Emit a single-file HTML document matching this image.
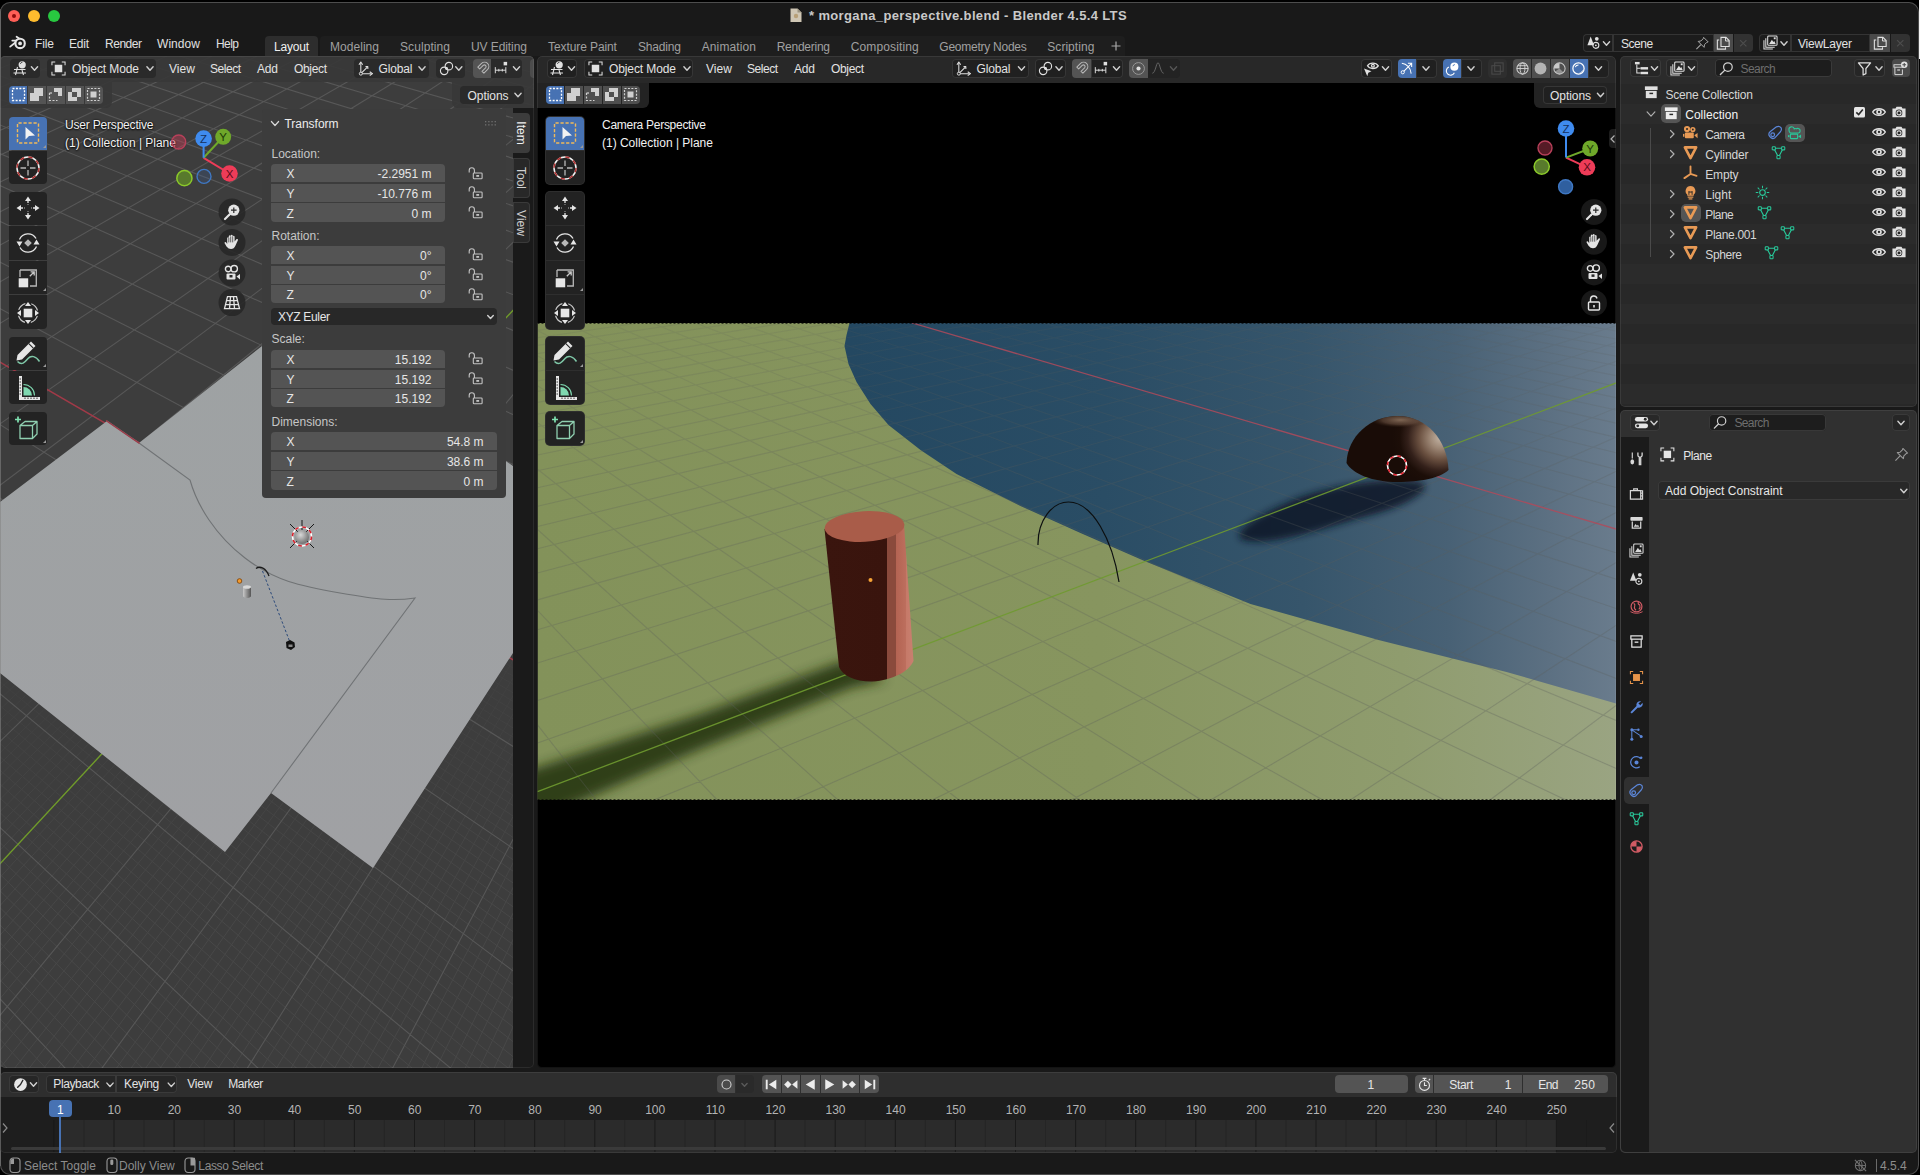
<!DOCTYPE html>
<html><head><meta charset="utf-8"><title>Blender</title>
<style>
*{box-sizing:border-box;margin:0;padding:0}
html,body{width:1920px;height:1175px;overflow:hidden;background:#000}
body{font-family:"Liberation Sans",sans-serif;font-size:12px;color:#e0e0e0;position:relative}
.a{position:absolute}
.win{position:absolute;left:0;top:0;width:1920px;height:1175px;overflow:hidden}
.winbg{position:absolute;left:0;top:1.500px;width:1918.500px;height:1173.500px;background:#191919;border-radius:10px;box-shadow:inset 0 0 0 1px rgba(120,120,120,.55)}
.t{position:absolute;white-space:nowrap;line-height:1}
.btn{position:absolute;border-radius:4px;background:#2a2a2a}
.area{position:absolute;overflow:hidden}
svg{position:absolute;overflow:visible}

</style></head>
<body>
<div class="win">
<div class="winbg"></div>
<div class="a" style="left:1919px;top:0;width:1px;height:59px;background:#f4f4f4"></div>
<!-- traffic lights -->
<div class="a" style="left:8px;top:10px;width:12px;height:12px;border-radius:6px;background:#fe5f57"></div>
<div class="a" style="left:12px;top:14px;width:4px;height:4px;border-radius:2px;background:#8c0b0b"></div>
<div class="a" style="left:28px;top:10px;width:12px;height:12px;border-radius:6px;background:#febc2e"></div>
<div class="a" style="left:48px;top:10px;width:12px;height:12px;border-radius:6px;background:#28c840"></div>


<!-- LEFT VIEWPORT AREA -->
<div class="area" id="vl" style="left:0;top:56px;width:534px;height:1012px;border-radius:5px;background:#3d3d3d">
<svg width="534" height="1012" viewBox="0 0 534 1012" style="left:0;top:0">
<defs>
<linearGradient id="plg" x1="0" y1="0" x2="0" y2="1"><stop offset="0" stop-color="#9ea2a3"/><stop offset="1" stop-color="#a0a1a4"/></linearGradient>
<linearGradient id="fade" x1="0" y1="500" x2="0" y2="860" gradientUnits="userSpaceOnUse"><stop offset="0" stop-color="#000"/><stop offset="1" stop-color="#fff"/></linearGradient>
<mask id="fm" maskUnits="userSpaceOnUse" x="0" y="0" width="534" height="1012"><rect x="0" y="0" width="534" height="1012" fill="url(#fade)"/></mask>
</defs>
<g mask="url(#fm)"><path d="M3.6 440.0L-2.0 444.3M12.5 440.0L-2.0 451.2M21.4 440.0L-2.0 458.2M30.3 440.0L-2.0 465.3M39.2 440.0L-2.0 472.5M48.1 440.0L-2.0 479.8M57.0 440.0L-2.0 487.2M65.9 440.0L-2.0 494.8M83.7 440.0L-2.0 510.3M92.5 440.0L-2.0 518.2M101.4 440.0L-2.0 526.3M110.3 440.0L-2.0 534.5M533.2 440.0L536.0 441.3M119.2 440.0L-2.0 542.8M521.6 440.0L536.0 447.0M128.1 440.0L-2.0 551.3M510.0 440.0L536.0 452.8M137.0 440.0L-2.0 560.0M498.4 440.0L536.0 458.6M145.8 440.0L-2.0 568.8M486.8 440.0L536.0 464.5M154.7 440.0L-2.0 577.7M475.2 440.0L536.0 470.5M172.5 440.0L-2.0 596.1M451.9 440.0L536.0 482.7M181.3 440.0L-2.0 605.5M440.3 440.0L536.0 488.9M190.2 440.0L-2.0 615.1M428.7 440.0L536.0 495.2M199.1 440.0L-2.0 624.9M417.1 440.0L536.0 501.6M208.0 440.0L-2.0 634.8M405.4 440.0L536.0 508.1M216.8 440.0L-2.0 645.0M393.8 440.0L536.0 514.6M225.7 440.0L-2.0 655.3M382.2 440.0L536.0 521.3M234.6 440.0L-2.0 665.8M370.5 440.0L536.0 528.1M243.4 440.0L-2.0 676.6M358.9 440.0L536.0 534.9M261.2 440.0L-2.0 698.7M335.6 440.0L536.0 548.9M270.0 440.0L-2.0 710.0M324.0 440.0L536.0 556.0M278.9 440.0L-2.0 721.6M312.3 440.0L536.0 563.3M287.7 440.0L-2.0 733.5M300.7 440.0L536.0 570.6M296.6 440.0L-2.0 745.6M289.0 440.0L536.0 578.1M305.4 440.0L-2.0 757.9M277.4 440.0L536.0 585.7M314.3 440.0L-2.0 770.5M265.7 440.0L536.0 593.3M323.2 440.0L-2.0 783.3M254.0 440.0L536.0 601.1M332.0 440.0L-2.0 796.5M242.4 440.0L536.0 609.1M349.7 440.0L-2.0 823.6M219.1 440.0L536.0 625.3M358.6 440.0L-2.0 837.6M207.4 440.0L536.0 633.6M367.4 440.0L-2.0 851.9M195.7 440.0L536.0 642.0M376.2 440.0L-2.0 866.5M184.0 440.0L536.0 650.5M385.1 440.0L-2.0 881.5M172.4 440.0L536.0 659.2M393.9 440.0L-2.0 896.8M160.7 440.0L536.0 668.0M402.8 440.0L-2.0 912.5M149.0 440.0L536.0 677.0M411.6 440.0L-2.0 928.5M137.3 440.0L536.0 686.1M420.4 440.0L-2.0 945.0M125.6 440.0L536.0 695.4M438.1 440.0L-2.0 979.0M102.3 440.0L536.0 714.3M447.0 440.0L-2.0 996.7M90.6 440.0L536.0 724.1M455.8 440.0L-1.4 1014.0M78.9 440.0L536.0 734.0M464.6 440.0L13.2 1014.0M67.2 440.0L536.0 744.0M473.4 440.0L27.8 1014.0M55.5 440.0L536.0 754.3M482.3 440.0L42.3 1014.0M43.8 440.0L536.0 764.7M491.1 440.0L56.9 1014.0M32.1 440.0L536.0 775.3M499.9 440.0L71.5 1014.0M20.4 440.0L536.0 786.1M508.8 440.0L86.1 1014.0M8.7 440.0L536.0 797.0M526.4 440.0L115.2 1014.0M-2.0 448.8L536.0 819.6M535.2 440.0L129.8 1014.0M-2.0 457.0L536.0 831.2M536.0 451.5L144.4 1014.0M-2.0 465.4L536.0 843.0M536.0 464.6L158.9 1014.0M-2.0 473.9L536.0 855.0M536.0 478.0L173.5 1014.0M-2.0 482.6L536.0 867.2M536.0 491.8L188.0 1014.0M-2.0 491.5L536.0 879.7M536.0 506.0L202.6 1014.0M-2.0 500.5L536.0 892.4M536.0 520.6L217.1 1014.0M-2.0 509.7L536.0 905.4M536.0 535.8L231.7 1014.0M-2.0 519.1L536.0 918.6M536.0 567.4L260.8 1014.0M-2.0 538.5L536.0 945.8M536.0 584.1L275.3 1014.0M-2.0 548.4L536.0 959.9M536.0 601.3L289.9 1014.0M-2.0 558.6L536.0 974.2M536.0 619.0L304.4 1014.0M-2.0 569.0L536.0 988.8M536.0 637.4L319.0 1014.0M-2.0 579.5L536.0 1003.7M536.0 656.4L333.5 1014.0M-2.0 590.4L529.8 1014.0M536.0 676.1L348.0 1014.0M-2.0 601.4L510.6 1014.0M536.0 696.6L362.6 1014.0M-2.0 612.7L491.3 1014.0M536.0 717.7L377.1 1014.0M-2.0 624.2L472.1 1014.0M536.0 762.5L406.1 1014.0M-2.0 648.0L433.6 1014.0M536.0 786.3L420.7 1014.0M-2.0 660.3L414.3 1014.0M536.0 810.9L435.2 1014.0M-2.0 672.9L395.0 1014.0M536.0 836.6L449.7 1014.0M-2.0 685.8L375.8 1014.0M536.0 863.4L464.2 1014.0M-2.0 698.9L356.5 1014.0M536.0 891.3L478.7 1014.0M-2.0 712.4L337.2 1014.0M536.0 920.4L493.3 1014.0M-2.0 726.2L317.9 1014.0M536.0 950.8L507.8 1014.0M-2.0 740.3L298.6 1014.0M536.0 982.6L522.3 1014.0M-2.0 754.8L279.3 1014.0M-2.0 784.8L240.7 1014.0M-2.0 800.4L221.4 1014.0M-2.0 816.4L202.1 1014.0M-2.0 832.8L182.8 1014.0M-2.0 849.6L163.5 1014.0M-2.0 866.9L144.2 1014.0M-2.0 884.6L124.9 1014.0M-2.0 902.9L105.5 1014.0M-2.0 921.6L86.2 1014.0M-2.0 960.6L47.5 1014.0M-2.0 981.0L28.2 1014.0M-2.0 1002.0L8.8 1014.0" stroke="#484848" stroke-width="1" fill="none"/></g>
<g><path d="M526.4 0.0L536.0 2.4M468.8 -0.0L536.0 17.3M31.2 0.0L-2.0 13.0M411.1 0.0L536.0 33.2M76.6 0.0L-2.0 32.1M353.3 -0.0L536.0 50.2M121.9 0.0L-2.0 52.8M295.4 0.0L536.0 68.5M167.1 0.0L-2.0 75.3M237.3 0.0L536.0 88.2M212.2 0.0L-2.0 100.0M179.2 0.0L536.0 109.4M257.3 0.0L-2.0 127.1M120.9 0.0L536.0 132.4M302.3 0.0L-2.0 157.0M62.5 0.0L536.0 157.4M347.3 0.0L-2.0 190.1M4.0 0.0L536.0 184.7M392.2 0.0L-2.0 227.1M-2.0 19.1L536.0 214.6M437.0 0.0L-2.0 268.7M-2.0 42.4L536.0 247.4M481.7 0.0L-2.0 315.7M-2.0 68.2L536.0 283.6M526.4 0.0L-2.0 369.2M-2.0 96.7L536.0 323.9M536.0 26.3L-2.0 430.8M-2.0 128.7L536.0 368.8M536.0 64.7L-2.0 502.5M-2.0 164.5L536.0 419.3M536.0 109.9L-2.0 586.8M-2.0 205.2L536.0 476.5M536.0 163.9L-2.0 687.5M-2.0 251.5L536.0 541.8M536.0 310.9L-2.0 961.8M-2.0 367.3L536.0 704.8M536.0 414.6L100.6 1014.0M-2.0 440.7L536.0 808.2M536.0 551.4L246.2 1014.0M-2.0 528.7L536.0 932.1M536.0 739.7L391.6 1014.0M-2.0 636.0L452.8 1014.0M-2.0 769.6L260.0 1014.0M-2.0 940.8L66.9 1014.0" stroke="#575757" stroke-width="1.1" fill="none"/></g>
<g><path d="M-2.0 305.0L536.0 617.1" stroke="#a13a48" stroke-width="1.4" fill="none"/><path d="M536.0 229.5L-2.0 809.9" stroke="#709c2a" stroke-width="1.4" fill="none"/></g>
<polygon points="0,446 107,365 139,387 262,290 300,260 513,410 534,424 534,566 513,597 373,812 271,737 225,796 0,617" fill="url(#plg)"/>
<path d="M107,365 L139,387 L190,424 C197,449 215,479 245,502 S300,530 340,537 S395,545 415,542 L271,737" fill="none" stroke="#707375" stroke-width="1.1"/>
<g transform="translate(0 -56)">
<path d="M106 420.500L139.500 443.500" stroke="#a13a48" stroke-width="1.400"/>
<defs><radialGradient id="lsp" cx=".4" cy=".35" r=".7"><stop offset="0" stop-color="#d8d8d8"/><stop offset="1" stop-color="#6a6a6a"/></radialGradient>
<linearGradient id="scy" x1="0" y1="0" x2="1" y2="0"><stop offset="0" stop-color="#c8c8c8"/><stop offset="1" stop-color="#555"/></linearGradient></defs>
<path d="M290 524L314 548M314 524L290 548M302 520V530" stroke="#1a1a1a" stroke-width="1"/>
<circle cx="302" cy="537" r="7" fill="url(#lsp)"/>
<circle cx="302" cy="536.500" r="9.500" fill="none" stroke="#fff" stroke-width="1.600"/>
<circle cx="302" cy="536.500" r="9.500" fill="none" stroke="#d8202c" stroke-width="1.600" stroke-dasharray="3.730 3.730"/>
<path d="M256 568.500C260 565.500 266 568 269 576" fill="none" stroke="#1a1a1a" stroke-width="1.300"/>
<path d="M262.500 571L289.500 641" stroke="#2c4a7a" stroke-width="1" stroke-dasharray="2.500 2"/>
<path d="M286 642L290 640L294.500 642.500L295 647L291 650L286.500 648Z" fill="#111"/><path d="M288.500 644.500H292.500V647H288.500Z" fill="#888"/>
<path d="M243 587V596.500Q247 599.500 251 596.500V587Z" fill="url(#scy)"/><ellipse cx="247" cy="587" rx="4" ry="1.800" fill="#d8d8d8"/>
<circle cx="239.500" cy="581" r="2.300" fill="#f39a2c" stroke="#7a3c00" stroke-width=".8"/>
</g>
</svg>
</div>
<!-- RIGHT VIEWPORT AREA -->
<div class="area" id="vr" style="left:536.500px;top:56px;width:1079.500px;height:1012px;border-radius:5px;background:#000">
<svg width="1080" height="1012" viewBox="536.500 56 1080 1012" style="left:0;top:0">
<defs>
<linearGradient id="gg" x1="537" y1="0" x2="1617" y2="0" gradientUnits="userSpaceOnUse"><stop offset="0" stop-color="#83925a"/><stop offset=".52" stop-color="#87955f"/><stop offset=".8" stop-color="#8f9c6e"/><stop offset="1" stop-color="#9aa482"/></linearGradient>
<linearGradient id="bg" x1="850" y1="0" x2="1617" y2="0" gradientUnits="userSpaceOnUse"><stop offset="0" stop-color="#244861"/><stop offset=".33" stop-color="#2a4d65"/><stop offset=".59" stop-color="#36556b"/><stop offset=".78" stop-color="#486175"/><stop offset=".91" stop-color="#5c7082"/><stop offset="1" stop-color="#6a7c8d"/></linearGradient>
<linearGradient id="gfade" x1="0" y1="323" x2="0" y2="800" gradientUnits="userSpaceOnUse"><stop offset="0" stop-color="#fff" stop-opacity=".45"/><stop offset=".35" stop-color="#fff" stop-opacity=".8"/><stop offset="1" stop-color="#fff" stop-opacity="1"/></linearGradient>
<mask id="gm" maskUnits="userSpaceOnUse" x="537" y="323" width="1080" height="477"><rect x="537" y="323" width="1080" height="477" fill="url(#gfade)"/></mask>
<filter id="b6" x="-20%" y="-20%" width="140%" height="140%"><feGaussianBlur stdDeviation="6"/></filter>
<filter id="b3" x="-20%" y="-20%" width="140%" height="140%"><feGaussianBlur stdDeviation="3.500"/></filter>
<filter id="b5" x="-20%" y="-20%" width="140%" height="140%"><feGaussianBlur stdDeviation="5"/></filter>
<clipPath id="rc"><rect x="537" y="323" width="1080" height="477"/></clipPath>
<clipPath id="bc"><polygon points="849,323 846,335 844,346 848,364 856,382 870,404 888,425 920,450 956,474 1020,506 1080,533 1144,561 1250,604 1378,640 1506,672 1617,704 1617,323"/></clipPath>
<clipPath id="gc"><path clip-rule="evenodd" d="M537 323H1617V800H537Z M849 323 L846 335 L844 346 L848 364 L856 382 L870 404 L888 425 L920 450 L956 474 L1020 506 L1080 533 L1144 561 L1250 604 L1378 640 L1506 672 L1617 704 L1617 323Z"/></clipPath>
<linearGradient id="cyl" x1="0" y1="0" x2="1" y2="0"><stop offset="0" stop-color="#3a150e"/><stop offset=".70" stop-color="#39140d"/><stop offset=".70" stop-color="#8a4a3c"/><stop offset=".80" stop-color="#8a4a3c"/><stop offset=".80" stop-color="#b36352"/><stop offset=".92" stop-color="#bd6f5e"/><stop offset=".92" stop-color="#c67a69"/><stop offset="1" stop-color="#c88070"/></linearGradient>
<radialGradient id="sph" cx="1440" cy="438" r="48" gradientUnits="userSpaceOnUse"><stop offset="0" stop-color="#c2b3a4"/><stop offset=".22" stop-color="#9c8674"/><stop offset=".45" stop-color="#6a5040"/><stop offset=".68" stop-color="#33201a"/><stop offset=".85" stop-color="#1c0e08"/><stop offset="1" stop-color="#190c07"/></radialGradient>
<radialGradient id="sphc" cx="1400" cy="420" r="30" gradientUnits="userSpaceOnUse" gradientTransform="translate(0 315) scale(1 .25)"><stop offset="0" stop-color="#8a705c" stop-opacity=".9"/><stop offset=".6" stop-color="#6a5040" stop-opacity=".6"/><stop offset="1" stop-color="#3a2518" stop-opacity="0"/></radialGradient>
</defs>
<g clip-path="url(#rc)">
<rect x="537" y="323" width="1080" height="477" fill="url(#gg)"/>
<polygon points="849,323 846,335 844,346 848,364 856,382 870,404 888,425 920,450 956,474 1020,506 1080,533 1144,561 1250,604 1378,640 1506,672 1617,704 1617,323" fill="url(#bg)"/>
<!-- cylinder shadow -->
<polygon points="842,661 886,680 850,688 700,749 560,810 500,838 500,780 560,760 700,714" fill="#243010" opacity=".86" filter="url(#b6)"/>
<!-- sphere shadow -->
<g clip-path="url(#bc)"><path d="M1242,540 C1228,532 1262,512 1300,497 C1335,484 1395,476 1420,482 C1436,488 1405,506 1375,514 C1335,524 1272,548 1242,540Z" fill="#0a1626" opacity=".85" filter="url(#b3)"/></g>
<g mask="url(#gm)"><path d="M540.6 323.0L537.0 323.5M589.3 323.0L537.0 330.4M638.0 323.0L537.0 337.7M686.8 323.0L537.0 345.4M735.7 323.0L537.0 353.6M784.6 323.0L537.0 362.2M833.5 323.0L537.0 371.3M882.6 323.0L537.0 381.0M931.6 323.0L537.0 391.4M980.7 323.0L537.0 402.4M1029.9 323.0L537.0 414.2M1079.1 323.0L537.0 426.8M1128.4 323.0L537.0 440.4M1177.8 323.0L537.0 455.0M1227.2 323.0L537.0 470.7M1276.6 323.0L537.0 487.8M1326.1 323.0L537.0 506.3M1375.7 323.0L537.0 526.5M1425.3 323.0L537.0 548.7M1474.9 323.0L537.0 573.0M1524.7 323.0L537.0 599.9M1574.4 323.0L537.0 629.7M1617.0 325.3L537.0 663.1M1617.0 342.0L537.0 700.6M1617.0 360.9L537.0 743.1M1617.0 407.4L653.5 800.0M1617.0 436.4L792.5 800.0M1617.0 470.7L931.6 800.0M1617.0 511.8L1070.8 800.0M1617.0 561.8L1210.2 800.0M1617.0 624.3L1349.8 800.0M1617.0 704.4L1489.5 800.0M1612.1 323.0L1617.0 323.8M1568.0 323.0L1617.0 331.3M1524.0 323.0L1617.0 339.2M1479.9 323.0L1617.0 347.5M1436.0 323.0L1617.0 356.4M1392.0 323.0L1617.0 365.8M1348.1 323.0L1617.0 375.9M1304.3 323.0L1617.0 386.6M1260.5 323.0L1617.0 398.0M1216.7 323.0L1617.0 410.3M1173.0 323.0L1617.0 423.5M1129.3 323.0L1617.0 437.7M1085.7 323.0L1617.0 453.1M1042.1 323.0L1617.0 469.8M998.6 323.0L1617.0 487.9M955.0 323.0L1617.0 507.7M868.2 323.0L1617.0 553.2M824.8 323.0L1617.0 579.6M781.5 323.0L1617.0 609.0M738.2 323.0L1617.0 641.9M694.9 323.0L1617.0 678.9M651.7 323.0L1617.0 720.9M608.5 323.0L1617.0 769.1M565.4 323.0L1565.3 800.0M537.0 330.6L1443.7 800.0M537.0 355.7L1322.2 800.0M537.0 385.8L1200.9 800.0M537.0 422.8L1079.6 800.0M537.0 469.3L958.5 800.0M537.0 529.5L837.5 800.0M537.0 610.4L716.7 800.0M537.0 724.9L595.9 800.0" stroke="#5c5e5c" stroke-opacity=".33" stroke-width="1.1" fill="none"/></g>
<path d="M911.6 323.0L1617.0 529.4" stroke="#b04a5a" stroke-width="1.3" stroke-opacity=".85" fill="none"/>
<path d="M1617.0 382.5L537.0 791.6" stroke="#6f9a30" stroke-width="1.3" stroke-opacity=".9" fill="none"/>
<!-- empty arc -->
<path d="M1037.500,545 C1037,520 1052,502 1068,502 C1092,502 1112,540 1118.500,582" fill="none" stroke="#0c0f10" stroke-width="1.2"/>
<!-- cylinder -->
<path d="M824,529 L838.500,667 C842,676 856,682 872,681.500 C892,680 908,672 913,661 L903.500,524 Z" fill="url(#cyl)"/>
<ellipse cx="864" cy="526.500" rx="40" ry="15.300" transform="rotate(-3 864 526.500)" fill="#a95c49"/>
<circle cx="870" cy="580" r="2" fill="#f5a336"/>
<!-- hemisphere -->
<path d="M1346,463 C1347,436 1370,416 1397,416 C1426,416 1447,440 1448,470 C1440,478 1420,482 1397,482 C1372,482 1352,474 1346,463Z" fill="url(#sph)"/>
<path d="M1346,463 C1347,436 1370,416 1397,416 C1426,416 1447,440 1448,470 C1440,478 1420,482 1397,482 C1372,482 1352,474 1346,463Z" fill="url(#sphc)"/>
<!-- 3d cursor -->
<circle cx="1396.500" cy="465.500" r="9.500" fill="none" stroke="#fff" stroke-width="1.6"/>
<circle cx="1396.500" cy="465.500" r="9.500" fill="none" stroke="#e0202c" stroke-width="1.6" stroke-dasharray="3.730 3.730"/>

</g>
<!-- dotted border of camera frame -->
<path d="M537 323.500H1617M537 799.500H1617" fill="none" stroke="#0a0a0a" stroke-width="1" stroke-dasharray="2 2" opacity=".7"/>
</svg>
</div>
<!-- OUTLINER -->
<div class="area" id="ol" style="left:1620px;top:56px;width:297px;height:351px;border-radius:5px;background:#282828">
</div>
<!-- PROPERTIES -->
<div class="area" id="pr" style="left:1620px;top:410px;width:297px;height:742.500px;border-radius:5px;background:#303030">
</div>
<!-- TIMELINE -->
<div class="area" id="tl" style="left:0;top:1071.500px;width:1617px;height:81px;border-radius:5px;background:#1e1e1e">
</div>

<svg class="a" style="left:789px;top:7px;" width="14" height="16" viewBox="0 0 14 16"><path d="M1.5 1.500 h7 l4 4 v9.500 h-11z" fill="#cfc6b4"/><path d="M8.500 1.500 v4 h4z" fill="#9a927f"/><circle cx="7" cy="9" r="2.200" fill="#b8a078"/></svg>
<div class="t" style="left:809.0px;top:6.9px;height:17px;line-height:17px;font-size:13px;color:#c9c9c9;letter-spacing:0.36px;font-weight:700;">* morgana_perspective.blend - Blender 4.5.4 LTS</div>
<svg class="a" style="left:9px;top:35px;" width="18" height="15" viewBox="0 0 18 15"><path d="M7.600 1.700L12 4.800M3.300 5.600H9M1.200 11.600L7 7" fill="none" stroke="#e6e6e6" stroke-width="1.800" stroke-linecap="round"/><circle cx="11.100" cy="8.400" r="4.700" fill="#191919" stroke="#e6e6e6" stroke-width="2.100"/><circle cx="11.100" cy="8.400" r="1.900" fill="#e6e6e6"/></svg>
<div class="t" style="left:35.0px;top:35.8px;height:16px;line-height:16px;font-size:12px;color:#e0e0e0;letter-spacing:-0.11px;">File</div>
<div class="t" style="left:69.0px;top:35.8px;height:16px;line-height:16px;font-size:12px;color:#e0e0e0;letter-spacing:-0.23px;">Edit</div>
<div class="t" style="left:105.0px;top:35.8px;height:16px;line-height:16px;font-size:12px;color:#e0e0e0;letter-spacing:-0.47px;">Render</div>
<div class="t" style="left:157.0px;top:35.8px;height:16px;line-height:16px;font-size:12px;color:#e0e0e0;letter-spacing:0.06px;">Window</div>
<div class="t" style="left:216.0px;top:35.8px;height:16px;line-height:16px;font-size:12px;color:#e0e0e0;letter-spacing:-0.56px;">Help</div>
<div class="a" style="left:320px;top:35.5px;width:805px;height:20px;background:#1e1e1e;border-radius:4px 4px 0 0;"></div>
<div class="a" style="left:265px;top:36px;width:53px;height:21px;background:#2d2d2d;border-radius:4px 4px 0 0;"></div>
<div class="t" style="left:274.0px;top:39.0px;height:16px;line-height:16px;font-size:12px;color:#f0f0f0;letter-spacing:-0.21px;">Layout</div>
<div class="t" style="left:330.0px;top:39.0px;height:16px;line-height:16px;font-size:12px;color:#a0a0a0;letter-spacing:0.04px;">Modeling</div>
<div class="t" style="left:400.0px;top:39.0px;height:16px;line-height:16px;font-size:12px;color:#a0a0a0;letter-spacing:0.08px;">Sculpting</div>
<div class="t" style="left:471.0px;top:39.0px;height:16px;line-height:16px;font-size:12px;color:#a0a0a0;letter-spacing:-0.08px;">UV Editing</div>
<div class="t" style="left:548.0px;top:39.0px;height:16px;line-height:16px;font-size:12px;color:#a0a0a0;letter-spacing:-0.09px;">Texture Paint</div>
<div class="t" style="left:638.0px;top:39.0px;height:16px;line-height:16px;font-size:12px;color:#a0a0a0;letter-spacing:-0.17px;">Shading</div>
<div class="t" style="left:701.7px;top:39.0px;height:16px;line-height:16px;font-size:12px;color:#a0a0a0;letter-spacing:0.12px;">Animation</div>
<div class="t" style="left:776.7px;top:39.0px;height:16px;line-height:16px;font-size:12px;color:#a0a0a0;letter-spacing:-0.26px;">Rendering</div>
<div class="t" style="left:850.7px;top:39.0px;height:16px;line-height:16px;font-size:12px;color:#a0a0a0;letter-spacing:0.13px;">Compositing</div>
<div class="t" style="left:939.3px;top:39.0px;height:16px;line-height:16px;font-size:12px;color:#a0a0a0;letter-spacing:-0.25px;">Geometry Nodes</div>
<div class="t" style="left:1047.3px;top:39.0px;height:16px;line-height:16px;font-size:12px;color:#a0a0a0;letter-spacing:0.04px;">Scripting</div>
<svg class="a" style="left:1110px;top:40px;" width="12" height="12" viewBox="0 0 12 12"><path d="M6 1.500V10.500M1.500 6H10.500" stroke="#a8a8a8" stroke-width="1.200" fill="none"/></svg>
<div class="a" style="left:0px;top:56px;width:534px;height:26px;background:rgba(55,55,55,.9);border-radius:5px 5px 0 0;"></div>
<div class="a" style="left:0px;top:82px;width:112px;height:26px;background:rgba(55,55,55,.9);border-radius:0 0 6px 0;"></div>
<div class="a" style="left:452px;top:82px;width:82px;height:26px;background:rgba(55,55,55,.9);border-radius:0 0 0 6px;"></div>
<div class="a" style="left:10px;top:59px;width:30px;height:18.5px;background:#2a2a2a;border-radius:4px;"></div>
<svg class="a" style="left:13px;top:60px;" width="16" height="16" viewBox="0 0 16 16"><path d="M1 9.500H12.500M0.500 13H13M4.500 7L2.500 15M9 10L10.500 15" stroke="#e0e0e0" stroke-width="1.100" fill="none"/><circle cx="9.200" cy="4.800" r="3.600" fill="#e0e0e0"/><path d="M7.300 3.800A2.300 2.300 0 0 1 9.400 2.300" stroke="#333" stroke-width=".9" fill="none"/></svg>
<svg class="a" style="left:0;top:0" width="1" height="1"><path d="M31.4 66.8 L34.5 70.2 L37.6 66.8" fill="none" stroke="#d0d0d0" stroke-width="1.4" stroke-linecap="round" stroke-linejoin="round"/></svg>
<div class="a" style="left:47px;top:59px;width:109px;height:18.5px;background:#2a2a2a;border-radius:4px;"></div>
<svg class="a" style="left:51px;top:60.5px;" width="15" height="15" viewBox="0 0 16 16"><rect x="4" y="4" width="8" height="8" fill="#e0e0e0"/><path d="M1 4.500V1H4.500M11.500 1H15V4.500M15 11.500V15H11.500M4.500 15H1V11.500" stroke="#e0e0e0" stroke-width="1.100" fill="none"/></svg>
<div class="t" style="left:72.0px;top:60.8px;height:16px;line-height:16px;font-size:12px;color:#e3e3e3;letter-spacing:-0.10px;">Object Mode</div>
<svg class="a" style="left:0;top:0" width="1" height="1"><path d="M146.9 66.8 L150.0 70.2 L153.1 66.8" fill="none" stroke="#d0d0d0" stroke-width="1.4" stroke-linecap="round" stroke-linejoin="round"/></svg>
<div class="t" style="left:169.0px;top:60.8px;height:16px;line-height:16px;font-size:12px;color:#e3e3e3;letter-spacing:0.07px;">View</div>
<div class="t" style="left:210.0px;top:60.8px;height:16px;line-height:16px;font-size:12px;color:#e3e3e3;letter-spacing:-0.47px;">Select</div>
<div class="t" style="left:257.0px;top:60.8px;height:16px;line-height:16px;font-size:12px;color:#e3e3e3;letter-spacing:-0.18px;">Add</div>
<div class="t" style="left:294.0px;top:60.8px;height:16px;line-height:16px;font-size:12px;color:#e3e3e3;letter-spacing:-0.34px;">Object</div>
<div class="a" style="left:353.5px;top:59px;width:75.5px;height:18.5px;background:#2a2a2a;border-radius:4px;"></div>
<svg class="a" style="left:357.5px;top:60.5px;" width="15" height="15" viewBox="0 0 16 16"><path d="M3 13.500V2M3 13.500H14.500M3 13.500L10 6.500" stroke="#e0e0e0" stroke-width="1.100" fill="none"/><path d="M1 4L3 1L5 4M12.500 11.500L15.500 13.500L12.500 15.500M8 6H10.500V8.500" stroke="#e0e0e0" stroke-width="1.100" fill="none" stroke-linejoin="round"/><circle cx="3" cy="13.500" r="1.600" fill="#2a2a2a" stroke="#e0e0e0" stroke-width="1"/></svg>
<div class="t" style="left:378.5px;top:60.8px;height:16px;line-height:16px;font-size:12px;color:#e3e3e3;letter-spacing:-0.14px;">Global</div>
<svg class="a" style="left:0;top:0" width="1" height="1"><path d="M418.9 66.8 L422.0 70.2 L425.1 66.8" fill="none" stroke="#d0d0d0" stroke-width="1.4" stroke-linecap="round" stroke-linejoin="round"/></svg>
<div class="a" style="left:435.8px;top:59px;width:29.5px;height:18.5px;background:#2a2a2a;border-radius:4px;"></div>
<svg class="a" style="left:438.8px;top:60.5px;" width="15" height="15" viewBox="0 0 16 16"><circle cx="5.500" cy="10.500" r="4" fill="none" stroke="#e0e0e0" stroke-width="1.200"/><circle cx="10.500" cy="5.500" r="4" fill="none" stroke="#e0e0e0" stroke-width="1.200"/><circle cx="8" cy="8" r="1.500" fill="#e0e0e0"/></svg>
<svg class="a" style="left:0;top:0" width="1" height="1"><path d="M455.7 66.8 L458.8 70.2 L461.9 66.8" fill="none" stroke="#d0d0d0" stroke-width="1.4" stroke-linecap="round" stroke-linejoin="round"/></svg>
<div class="a" style="left:472.8px;top:59px;width:18.5px;height:18.5px;background:#545454;border-radius:4px 0 0 4px;"></div>
<svg class="a" style="left:474.8px;top:60.5px;" width="15" height="15" viewBox="0 0 16 16"><path d="M3 6.500 L7 2.500 A4.600 4.600 0 0 1 13.500 9 L9.500 13 L7.500 11 L11.500 7 A1.800 1.800 0 0 0 9 4.500 L5 8.500Z" fill="none" stroke="#b8b8b8" stroke-width="1.100" stroke-linejoin="round"/></svg>
<div class="a" style="left:491.3px;top:59px;width:31.2px;height:18.5px;background:#2a2a2a;border-radius:0 4px 4px 0;"></div>
<svg class="a" style="left:493.8px;top:61px;" width="14" height="14" viewBox="0 0 16 16"><path d="M1.500 7V14M13.500 7V14M1.500 10.500H13.500M5.500 9V12M9.500 9V12" stroke="#e0e0e0" stroke-width="1.100" fill="none"/><rect x="11" y="1" width="4" height="4" fill="#e0e0e0"/></svg>
<svg class="a" style="left:0;top:0" width="1" height="1"><path d="M513.4 66.8 L516.5 70.2 L519.6 66.8" fill="none" stroke="#d0d0d0" stroke-width="1.4" stroke-linecap="round" stroke-linejoin="round"/></svg>
<div class="a" style="left:529.5px;top:59px;width:4.5px;height:18.5px;background:#4c4c4c;border-radius:4px 0 0 4px;"></div>
<div class="a" style="left:9px;top:85.5px;width:18.3px;height:18.5px;background:#4772b3;border-radius:4px 0 0 4px;"></div>
<svg class="a" style="left:8.8px;top:85.3px;" width="19" height="19" viewBox="0 0 19 19"><rect x="3.500" y="3.500" width="12" height="12" fill="none" stroke="#fff" stroke-width="1.300" stroke-dasharray="2 1.430"/></svg>
<div class="a" style="left:27.8px;top:85.5px;width:18.5px;height:18.5px;background:#545454;border-radius:0;"></div>
<svg class="a" style="left:27.1px;top:85.3px;" width="19" height="19" viewBox="0 0 19 19"><path d="M7 3H16V11H12V16H3V8H7Z" fill="#d0d0d0"/></svg>
<div class="a" style="left:46.8px;top:85.5px;width:18.5px;height:18.5px;background:#545454;border-radius:0;"></div>
<svg class="a" style="left:46.1px;top:85.3px;" width="19" height="19" viewBox="0 0 19 19"><path d="M8 3H16V11H12V7H8Z" fill="#d0d0d0"/><path d="M3.500 8V15.500H11.500" fill="none" stroke="#d0d0d0" stroke-width="1.200" stroke-dasharray="2 1.500"/><path d="M3.500 8H6" stroke="#d0d0d0" stroke-width="1.200"/></svg>
<div class="a" style="left:65.8px;top:85.5px;width:18.5px;height:18.5px;background:#545454;border-radius:0;"></div>
<svg class="a" style="left:65.1px;top:85.3px;" width="19" height="19" viewBox="0 0 19 19"><path d="M7 3H16V12H12V16H3V7H7Z M7 7V12H12V7Z" fill="#d0d0d0" fill-rule="evenodd"/></svg>
<div class="a" style="left:84.8px;top:85.5px;width:17.8px;height:18.5px;background:#545454;border-radius:0 4px 4px 0;"></div>
<svg class="a" style="left:84.1px;top:85.3px;" width="19" height="19" viewBox="0 0 19 19"><rect x="3.500" y="3.500" width="12" height="12" fill="none" stroke="#d0d0d0" stroke-width="1.200" stroke-dasharray="2 1.430"/><rect x="6.500" y="6.500" width="6" height="6" fill="#d0d0d0"/></svg>
<div class="a" style="left:460px;top:85.5px;width:64px;height:18.5px;background:#2a2a2a;border-radius:4px;"></div>
<div class="t" style="left:467.5px;top:88.0px;height:16px;line-height:16px;font-size:12px;color:#e3e3e3;letter-spacing:-0.06px;">Options</div>
<svg class="a" style="left:0;top:0" width="1" height="1"><path d="M514.9 93.3 L518.0 96.7 L521.1 93.3" fill="none" stroke="#d0d0d0" stroke-width="1.4" stroke-linecap="round" stroke-linejoin="round"/></svg>
<div class="a" style="left:536.5px;top:56px;width:1079.5px;height:27px;background:#282828;border-radius:5px 5px 0 0;"></div>
<div class="a" style="left:536.5px;top:83px;width:112px;height:24.5px;background:#232323;border-radius:0 0 6px 0;"></div>
<div class="a" style="left:1534px;top:83px;width:82px;height:24.5px;background:#232323;border-radius:0 0 0 6px;"></div>
<div class="a" style="left:547px;top:59px;width:30px;height:18.5px;background:#202020;border-radius:4px;box-shadow:inset 0 0 0 1px #363636;"></div>
<svg class="a" style="left:550px;top:60px;" width="16" height="16" viewBox="0 0 16 16"><path d="M1 9.500H12.500M0.500 13H13M4.500 7L2.500 15M9 10L10.500 15" stroke="#e0e0e0" stroke-width="1.100" fill="none"/><circle cx="9.200" cy="4.800" r="3.600" fill="#e0e0e0"/><path d="M7.300 3.800A2.300 2.300 0 0 1 9.400 2.300" stroke="#333" stroke-width=".9" fill="none"/></svg>
<svg class="a" style="left:0;top:0" width="1" height="1"><path d="M568.4 66.8 L571.5 70.2 L574.6 66.8" fill="none" stroke="#d0d0d0" stroke-width="1.4" stroke-linecap="round" stroke-linejoin="round"/></svg>
<div class="a" style="left:584px;top:59px;width:109px;height:18.5px;background:#202020;border-radius:4px;box-shadow:inset 0 0 0 1px #363636;"></div>
<svg class="a" style="left:588px;top:60.5px;" width="15" height="15" viewBox="0 0 16 16"><rect x="4" y="4" width="8" height="8" fill="#e0e0e0"/><path d="M1 4.500V1H4.500M11.500 1H15V4.500M15 11.500V15H11.500M4.500 15H1V11.500" stroke="#e0e0e0" stroke-width="1.100" fill="none"/></svg>
<div class="t" style="left:609.0px;top:60.8px;height:16px;line-height:16px;font-size:12px;color:#e3e3e3;letter-spacing:-0.10px;">Object Mode</div>
<svg class="a" style="left:0;top:0" width="1" height="1"><path d="M683.9 66.8 L687.0 70.2 L690.1 66.8" fill="none" stroke="#d0d0d0" stroke-width="1.4" stroke-linecap="round" stroke-linejoin="round"/></svg>
<div class="t" style="left:706.0px;top:60.8px;height:16px;line-height:16px;font-size:12px;color:#e3e3e3;letter-spacing:0.07px;">View</div>
<div class="t" style="left:747.0px;top:60.8px;height:16px;line-height:16px;font-size:12px;color:#e3e3e3;letter-spacing:-0.47px;">Select</div>
<div class="t" style="left:794.0px;top:60.8px;height:16px;line-height:16px;font-size:12px;color:#e3e3e3;letter-spacing:-0.18px;">Add</div>
<div class="t" style="left:831.0px;top:60.8px;height:16px;line-height:16px;font-size:12px;color:#e3e3e3;letter-spacing:-0.34px;">Object</div>
<div class="a" style="left:951.5px;top:59px;width:77px;height:18.5px;background:#202020;border-radius:4px;box-shadow:inset 0 0 0 1px #363636;"></div>
<svg class="a" style="left:955.5px;top:60.5px;" width="15" height="15" viewBox="0 0 16 16"><path d="M3 13.500V2M3 13.500H14.500M3 13.500L10 6.500" stroke="#e0e0e0" stroke-width="1.100" fill="none"/><path d="M1 4L3 1L5 4M12.500 11.500L15.500 13.500L12.500 15.500M8 6H10.500V8.500" stroke="#e0e0e0" stroke-width="1.100" fill="none" stroke-linejoin="round"/><circle cx="3" cy="13.500" r="1.600" fill="#2a2a2a" stroke="#e0e0e0" stroke-width="1"/></svg>
<div class="t" style="left:976.5px;top:60.8px;height:16px;line-height:16px;font-size:12px;color:#e3e3e3;letter-spacing:-0.14px;">Global</div>
<svg class="a" style="left:0;top:0" width="1" height="1"><path d="M1018.4 66.8 L1021.5 70.2 L1024.6 66.8" fill="none" stroke="#d0d0d0" stroke-width="1.4" stroke-linecap="round" stroke-linejoin="round"/></svg>
<div class="a" style="left:1035px;top:59px;width:30.5px;height:18.5px;background:#202020;border-radius:4px;box-shadow:inset 0 0 0 1px #363636;"></div>
<svg class="a" style="left:1038px;top:60.5px;" width="15" height="15" viewBox="0 0 16 16"><circle cx="5.500" cy="10.500" r="4" fill="none" stroke="#e0e0e0" stroke-width="1.200"/><circle cx="10.500" cy="5.500" r="4" fill="none" stroke="#e0e0e0" stroke-width="1.200"/><circle cx="8" cy="8" r="1.500" fill="#e0e0e0"/></svg>
<svg class="a" style="left:0;top:0" width="1" height="1"><path d="M1055.9 66.8 L1059.0 70.2 L1062.1 66.8" fill="none" stroke="#d0d0d0" stroke-width="1.4" stroke-linecap="round" stroke-linejoin="round"/></svg>
<div class="a" style="left:1072px;top:59px;width:19px;height:18.5px;background:#545454;border-radius:4px 0 0 4px;"></div>
<svg class="a" style="left:1074px;top:60.5px;" width="15" height="15" viewBox="0 0 16 16"><path d="M3 6.500 L7 2.500 A4.600 4.600 0 0 1 13.500 9 L9.500 13 L7.500 11 L11.500 7 A1.800 1.800 0 0 0 9 4.500 L5 8.500Z" fill="none" stroke="#b8b8b8" stroke-width="1.100" stroke-linejoin="round"/></svg>
<div class="a" style="left:1091px;top:59px;width:31.5px;height:18.5px;background:#202020;border-radius:0 4px 4px 0;box-shadow:inset 0 0 0 1px #363636;"></div>
<svg class="a" style="left:1093.5px;top:61px;" width="14" height="14" viewBox="0 0 16 16"><path d="M1.500 7V14M13.500 7V14M1.500 10.500H13.500M5.500 9V12M9.500 9V12" stroke="#e0e0e0" stroke-width="1.100" fill="none"/><rect x="11" y="1" width="4" height="4" fill="#e0e0e0"/></svg>
<svg class="a" style="left:0;top:0" width="1" height="1"><path d="M1113.4 66.8 L1116.5 70.2 L1119.6 66.8" fill="none" stroke="#d0d0d0" stroke-width="1.4" stroke-linecap="round" stroke-linejoin="round"/></svg>
<div class="a" style="left:1129px;top:59px;width:19px;height:18.5px;background:#545454;border-radius:4px 0 0 4px;"></div>
<svg class="a" style="left:1131px;top:60.5px;" width="15" height="15" viewBox="0 0 16 16"><circle cx="8" cy="8" r="6.300" fill="none" stroke="#9a9a9a" stroke-width="1"/><circle cx="8" cy="8" r="2.200" fill="#e0e0e0"/></svg>
<div class="a" style="left:1148px;top:59px;width:31.5px;height:18.5px;background:#232323;border-radius:0 4px 4px 0;"></div>
<svg class="a" style="left:1150.5px;top:61px;" width="14" height="14" viewBox="0 0 16 16"><path d="M1.500 14C5 14 6 2 8 2C10 2 11 14 14.500 14" stroke="#666" stroke-width="1.100" fill="none"/></svg>
<svg class="a" style="left:0;top:0" width="1" height="1"><path d="M1170.4 66.8 L1173.5 70.2 L1176.6 66.8" fill="none" stroke="#555" stroke-width="1.4" stroke-linecap="round" stroke-linejoin="round"/></svg>
<div class="a" style="left:546px;top:85.5px;width:18.3px;height:18.5px;background:#4772b3;border-radius:4px 0 0 4px;"></div>
<svg class="a" style="left:545.8px;top:85.3px;" width="19" height="19" viewBox="0 0 19 19"><rect x="3.500" y="3.500" width="12" height="12" fill="none" stroke="#fff" stroke-width="1.300" stroke-dasharray="2 1.430"/></svg>
<div class="a" style="left:564.8px;top:85.5px;width:18.5px;height:18.5px;background:#4f4f4f;border-radius:0;"></div>
<svg class="a" style="left:564.1px;top:85.3px;" width="19" height="19" viewBox="0 0 19 19"><path d="M7 3H16V11H12V16H3V8H7Z" fill="#d0d0d0"/></svg>
<div class="a" style="left:583.8px;top:85.5px;width:18.5px;height:18.5px;background:#4f4f4f;border-radius:0;"></div>
<svg class="a" style="left:583.1px;top:85.3px;" width="19" height="19" viewBox="0 0 19 19"><path d="M8 3H16V11H12V7H8Z" fill="#d0d0d0"/><path d="M3.500 8V15.500H11.500" fill="none" stroke="#d0d0d0" stroke-width="1.200" stroke-dasharray="2 1.500"/><path d="M3.500 8H6" stroke="#d0d0d0" stroke-width="1.200"/></svg>
<div class="a" style="left:602.8px;top:85.5px;width:18.5px;height:18.5px;background:#4f4f4f;border-radius:0;"></div>
<svg class="a" style="left:602.1px;top:85.3px;" width="19" height="19" viewBox="0 0 19 19"><path d="M7 3H16V12H12V16H3V7H7Z M7 7V12H12V7Z" fill="#d0d0d0" fill-rule="evenodd"/></svg>
<div class="a" style="left:621.8px;top:85.5px;width:17.8px;height:18.5px;background:#4f4f4f;border-radius:0 4px 4px 0;"></div>
<svg class="a" style="left:621.1px;top:85.3px;" width="19" height="19" viewBox="0 0 19 19"><rect x="3.500" y="3.500" width="12" height="12" fill="none" stroke="#d0d0d0" stroke-width="1.200" stroke-dasharray="2 1.430"/><rect x="6.500" y="6.500" width="6" height="6" fill="#d0d0d0"/></svg>
<div class="a" style="left:1542.5px;top:85.5px;width:64px;height:18.5px;background:#202020;border-radius:4px;box-shadow:inset 0 0 0 1px #363636;"></div>
<div class="t" style="left:1550.0px;top:88.0px;height:16px;line-height:16px;font-size:12px;color:#e3e3e3;letter-spacing:-0.06px;">Options</div>
<svg class="a" style="left:0;top:0" width="1" height="1"><path d="M1597.4 93.3 L1600.5 96.7 L1603.6 93.3" fill="none" stroke="#d0d0d0" stroke-width="1.4" stroke-linecap="round" stroke-linejoin="round"/></svg>
<div class="a" style="left:1360.5px;top:59px;width:31.5px;height:18.5px;background:#202020;border-radius:4px;box-shadow:inset 0 0 0 1px #363636;"></div>
<svg class="a" style="left:1363px;top:60.5px;" width="16" height="16" viewBox="0 0 16 16"><path d="M4.500 4.800C6.500 1.200 13 1.200 15.300 4.800C13 8.400 6.500 8.400 4.500 4.800Z" fill="none" stroke="#e0e0e0" stroke-width="1.300"/><circle cx="9.900" cy="4.800" r="2" fill="#e0e0e0"/><circle cx="9.900" cy="4.800" r=".8" fill="#1c1c1c"/><path d="M1 7.500L8.500 10.300L5.300 11.800L4.300 15.200Z" fill="#e0e0e0"/></svg>
<svg class="a" style="left:0;top:0" width="1" height="1"><path d="M1382.4 66.8 L1385.5 70.2 L1388.6 66.8" fill="none" stroke="#d0d0d0" stroke-width="1.4" stroke-linecap="round" stroke-linejoin="round"/></svg>
<div class="a" style="left:1397.5px;top:59px;width:18.5px;height:18.5px;background:#4772b3;border-radius:4px 0 0 4px;"></div>
<svg class="a" style="left:1399px;top:60.5px;" width="15" height="15" viewBox="0 0 16 16"><path d="M3 2.500C8 3 12.500 7 13 13.500" fill="none" stroke="#fff" stroke-width="1.100"/><path d="M4.500 11.500L13.500 2.500M9.500 2.500H13.500V6.500" fill="none" stroke="#fff" stroke-width="1.100"/><circle cx="4" cy="12" r="1.700" fill="#4772b3" stroke="#fff" stroke-width="1"/></svg>
<div class="a" style="left:1416px;top:59px;width:20.5px;height:18.5px;background:#202020;border-radius:0 4px 4px 0;box-shadow:inset 0 0 0 1px #363636;"></div>
<svg class="a" style="left:0;top:0" width="1" height="1"><path d="M1422.9 66.8 L1426.0 70.2 L1429.1 66.8" fill="none" stroke="#d0d0d0" stroke-width="1.4" stroke-linecap="round" stroke-linejoin="round"/></svg>
<div class="a" style="left:1442.8px;top:59px;width:18.2px;height:18.5px;background:#4772b3;border-radius:4px 0 0 4px;"></div>
<svg class="a" style="left:1444.5px;top:60.5px;" width="15" height="15" viewBox="0 0 16 16"><circle cx="10" cy="6" r="4.300" fill="#fff"/><path d="M8.500 5.500A2 2 0 0 1 10.500 3.800" stroke="#4772b3" stroke-width="1" fill="none"/><path d="M4.200 6.500A4.500 4.500 0 1 0 10 12.500" fill="none" stroke="#fff" stroke-width="1.200"/></svg>
<div class="a" style="left:1461px;top:59px;width:20.5px;height:18.5px;background:#202020;border-radius:0 4px 4px 0;box-shadow:inset 0 0 0 1px #363636;"></div>
<svg class="a" style="left:0;top:0" width="1" height="1"><path d="M1467.9 66.8 L1471.0 70.2 L1474.1 66.8" fill="none" stroke="#d0d0d0" stroke-width="1.4" stroke-linecap="round" stroke-linejoin="round"/></svg>
<div class="a" style="left:1487.5px;top:59px;width:19px;height:18.5px;background:#2e2e2e;border-radius:4px;"></div>
<svg class="a" style="left:1489.5px;top:60.5px;" width="15" height="15" viewBox="0 0 16 16"><rect x="2" y="5" width="9" height="9" fill="none" stroke="#4a4a4a" stroke-width="1.100"/><rect x="5" y="2" width="9" height="9" fill="none" stroke="#4a4a4a" stroke-width="1.100"/></svg>
<div class="a" style="left:1512.5px;top:59px;width:18.9px;height:18.5px;background:#4f4f4f;border-radius:4px 0 0 4px;"></div>
<svg class="a" style="left:1514.5px;top:60.5px;" width="15" height="15" viewBox="0 0 16 16"><circle cx="8" cy="8" r="6" fill="none" stroke="#d0d0d0" stroke-width="1.100"/><ellipse cx="8" cy="8" rx="2.600" ry="6" fill="none" stroke="#d0d0d0" stroke-width="1"/><path d="M2 8H14M3 5H13" stroke="#d0d0d0" stroke-width="1" fill="none"/></svg>
<div class="a" style="left:1531.9px;top:59px;width:18.5px;height:18.5px;background:#4f4f4f;border-radius:0;"></div>
<svg class="a" style="left:1533.4px;top:60.5px;" width="15" height="15" viewBox="0 0 16 16"><circle cx="8" cy="8" r="6.300" fill="#b4b4b4"/></svg>
<div class="a" style="left:1550.9px;top:59px;width:18.5px;height:18.5px;background:#4f4f4f;border-radius:0;"></div>
<svg class="a" style="left:1552.4px;top:60.5px;" width="15" height="15" viewBox="0 0 16 16"><circle cx="8" cy="8" r="6" fill="none" stroke="#c8c8c8" stroke-width="1.100"/><path d="M8 8V2A6 6 0 0 0 2 8Z" fill="#c8c8c8"/><path d="M8 8L12.300 12.300A6 6 0 0 1 3 11.500Z" fill="#c8c8c8" opacity=".55"/></svg>
<div class="a" style="left:1569.9px;top:59px;width:18.3px;height:18.5px;background:#4772b3;border-radius:0;"></div>
<svg class="a" style="left:1571.4px;top:60.5px;" width="15" height="15" viewBox="0 0 16 16"><circle cx="8" cy="8" r="6" fill="none" stroke="#fff" stroke-width="1.300"/><path d="M4.500 6.500A3.800 3.800 0 0 1 8 4.200" stroke="#fff" stroke-width="1.100" fill="none"/><path d="M11 12L12.500 10M9.500 12.800L10 12" stroke="#fff" stroke-width=".8"/></svg>
<div class="a" style="left:1588.2px;top:59px;width:20.6px;height:18.5px;background:#202020;border-radius:0 4px 4px 0;box-shadow:inset 0 0 0 1px #363636;"></div>
<svg class="a" style="left:0;top:0" width="1" height="1"><path d="M1595.4 66.8 L1598.5 70.2 L1601.6 66.8" fill="none" stroke="#d0d0d0" stroke-width="1.4" stroke-linecap="round" stroke-linejoin="round"/></svg>
<div class="a" style="left:9px;top:117px;width:38px;height:33.3px;background:#4772b3;border-radius:4px 4px 0 0;"></div>
<div class="a" style="left:9px;top:151.2px;width:38px;height:33.3px;background:#232323;border-radius:0 0 4px 4px;"></div>
<div class="a" style="left:9px;top:191.6px;width:38px;height:33.4px;background:#232323;border-radius:4px 4px 0 0;"></div>
<div class="a" style="left:9px;top:226px;width:38px;height:33.5px;background:#232323;border-radius:0;"></div>
<div class="a" style="left:9px;top:260.5px;width:38px;height:33.5px;background:#232323;border-radius:0;"></div>
<div class="a" style="left:9px;top:295px;width:38px;height:34px;background:#232323;border-radius:0 0 4px 4px;"></div>
<div class="a" style="left:9px;top:336.5px;width:38px;height:33.3px;background:#232323;border-radius:4px 4px 0 0;"></div>
<div class="a" style="left:9px;top:370.8px;width:38px;height:33.7px;background:#232323;border-radius:0 0 4px 4px;"></div>
<div class="a" style="left:9px;top:411.5px;width:38px;height:33.5px;background:#232323;border-radius:4px;"></div>
<svg class="a" style="left:15px;top:119.5px;" width="26" height="26" viewBox="-13 -13 26 26"><rect x="-10.500" y="-10" width="21" height="20" rx="1" fill="none" stroke="#f0b95a" stroke-width="1.400" stroke-dasharray="3.200 1.800"/><path d="M-2.500 -6L-2.500 6.500L1 3L7 2.500Z" fill="#f2f2f2"/></svg>
<svg class="a" style="left:43px;top:144.5px;" width="3" height="3" viewBox="0 0 3 3"><path d="M3 0V3H0Z" fill="#9a9a9a"/></svg>
<svg class="a" style="left:15px;top:154.5px;" width="26" height="26" viewBox="-13 -13 26 26"><circle r="11" fill="none" stroke="#f2f2f2" stroke-width="1.500"/><circle r="11" fill="none" stroke="#b03030" stroke-width="1.500" stroke-dasharray="4.320 4.320"/><path d="M-7.500 0H-2M2 0H7.500M0 -7.500V-2M0 2V7.500" stroke="#b8b8b8" stroke-width="1.300"/></svg>
<svg class="a" style="left:15px;top:195px;" width="26" height="26" viewBox="-13 -13 26 26"><path d="M0 -11.500L3 -7H-3ZM0 11.500L3 7H-3ZM-11.500 0L-7 -3V3ZM11.500 0L7 -3V3Z" fill="#e6e6e6"/><path d="M0 -7V-3.500M0 7V3.500M-7 0H-3.500M7 0H3.500" stroke="#e6e6e6" stroke-width="1.300" stroke-dasharray="2 1"/></svg>
<svg class="a" style="left:15px;top:229.5px;" width="26" height="26" viewBox="-13 -13 26 26"><path d="M-8.500 -3.500A9.200 9.200 0 0 1 8 -4.500M8.500 3.500A9.200 9.200 0 0 1 -8 4.500" fill="none" stroke="#e6e6e6" stroke-width="1.300"/><path d="M-11.500 -1.500H-5.500L-8.500 3.500ZM11.500 1.500H5.500L8.500 -3.500Z" fill="#e6e6e6"/><path d="M0 -3.800L3.800 0L0 3.800L-3.800 0Z" fill="#b8b8b8"/></svg>
<svg class="a" style="left:15px;top:264.5px;" width="26" height="26" viewBox="-13 -13 26 26"><path d="M-8 -8H8.300V8H2" fill="none" stroke="#b8b8b8" stroke-width="1.300"/><path d="M-8 -8V-1" fill="none" stroke="#b8b8b8" stroke-width="1.300"/><rect x="-9.300" y=".3" width="9.500" height="9" fill="#e6e6e6"/><path d="M1.800 -1.800L6 -6M2.600 -6.200H6.200V-2.600" stroke="#c8c8c8" stroke-width="1.300" fill="none"/></svg>
<svg class="a" style="left:43px;top:288px;" width="3" height="3" viewBox="0 0 3 3"><path d="M3 0V3H0Z" fill="#9a9a9a"/></svg>
<svg class="a" style="left:15px;top:299.5px;" width="26" height="26" viewBox="-13 -13 26 26"><circle r="9.800" fill="none" stroke="#c8c8c8" stroke-width="1.200" stroke-dasharray="9.400 6" stroke-dashoffset="-3"/><rect x="-4.300" y="-4.300" width="8.600" height="8.600" fill="#e6e6e6"/><path d="M0 -11L3 -7H-3ZM0 11L3 7H-3ZM-11 0L-7 -3V3ZM11 0L7 -3V3Z" fill="#e6e6e6"/></svg>
<svg class="a" style="left:15px;top:340px;" width="26" height="26" viewBox="-13 -13 26 26"><path d="M-10.500 2L3 -11.500L7.500 -7L-6 6.500L-11.500 7.500Z" fill="#e6e6e6"/><path d="M.8 -9.300L5.300 -4.800" stroke="#232323" stroke-width="1.100"/><path d="M-10.500 8.500C-6 13 -3 9 0 5.500C3 2 8 3 11.500 8.500" fill="none" stroke="#7fc8a8" stroke-width="1.500"/></svg>
<svg class="a" style="left:43px;top:364px;" width="3" height="3" viewBox="0 0 3 3"><path d="M3 0V3H0Z" fill="#9a9a9a"/></svg>
<svg class="a" style="left:15px;top:375px;" width="26" height="26" viewBox="-13 -13 26 26"><path d="M-9 -12H-6V9H12V12H-9Z" fill="#e6e6e6"/><path d="M-8.500 -9H-7M-8.500 -6H-7M-8.500 -3H-7M-8.500 0H-7M-8.500 3H-7M-8.500 6H-7M-3 9.500V11M0 9.500V11M3 9.500V11M6 9.500V11M9 9.500V11" stroke="#232323" stroke-width=".9"/><path d="M-4.500 7.500V-1A8.500 8.500 0 0 1 4 7.500Z" fill="#7fd8b0"/><path d="M-4.500 -3.500A11 11 0 0 1 6.500 7.500" fill="none" stroke="#7fd8b0" stroke-width="1.100"/></svg>
<svg class="a" style="left:15px;top:415.5px;" width="26" height="26" viewBox="-13 -13 26 26"><path d="M-8 -3.500L-3 -7.500H9V5L4.500 9.500H-8ZM-8 -3.500H4.500V9.500M4.500 -3.500L9 -7.500" fill="none" stroke="#8fcfb0" stroke-width="1.300" stroke-linejoin="round"/><path d="M-10 -12.500V-6.500M-13 -9.500H-7" stroke="#7fe0b0" stroke-width="1.700"/></svg>
<svg class="a" style="left:43px;top:439.5px;" width="3" height="3" viewBox="0 0 3 3"><path d="M3 0V3H0Z" fill="#9a9a9a"/></svg>
<div class="a" style="left:545.6px;top:117px;width:38px;height:33.3px;background:#4772b3;border-radius:4px 4px 0 0;box-shadow:0 0 0 1px #2e2e2e;"></div>
<div class="a" style="left:545.6px;top:151.2px;width:38px;height:33.3px;background:#222;border-radius:0 0 4px 4px;box-shadow:0 0 0 1px #2e2e2e;"></div>
<div class="a" style="left:545.6px;top:191.6px;width:38px;height:33.4px;background:#222;border-radius:4px 4px 0 0;box-shadow:0 0 0 1px #2e2e2e;"></div>
<div class="a" style="left:545.6px;top:226px;width:38px;height:33.5px;background:#222;border-radius:0;box-shadow:0 0 0 1px #2e2e2e;"></div>
<div class="a" style="left:545.6px;top:260.5px;width:38px;height:33.5px;background:#222;border-radius:0;box-shadow:0 0 0 1px #2e2e2e;"></div>
<div class="a" style="left:545.6px;top:295px;width:38px;height:34px;background:#222;border-radius:0 0 4px 4px;box-shadow:0 0 0 1px #2e2e2e;"></div>
<div class="a" style="left:545.6px;top:336.5px;width:38px;height:33.3px;background:#222;border-radius:4px 4px 0 0;box-shadow:0 0 0 1px #2e2e2e;"></div>
<div class="a" style="left:545.6px;top:370.8px;width:38px;height:33.7px;background:#222;border-radius:0 0 4px 4px;box-shadow:0 0 0 1px #2e2e2e;"></div>
<div class="a" style="left:545.6px;top:411.5px;width:38px;height:33.5px;background:#222;border-radius:4px;box-shadow:0 0 0 1px #2e2e2e;"></div>
<svg class="a" style="left:551.6px;top:119.5px;" width="26" height="26" viewBox="-13 -13 26 26"><rect x="-10.500" y="-10" width="21" height="20" rx="1" fill="none" stroke="#f0b95a" stroke-width="1.400" stroke-dasharray="3.200 1.800"/><path d="M-2.500 -6L-2.500 6.500L1 3L7 2.500Z" fill="#f2f2f2"/></svg>
<svg class="a" style="left:579.6px;top:144.5px;" width="3" height="3" viewBox="0 0 3 3"><path d="M3 0V3H0Z" fill="#9a9a9a"/></svg>
<svg class="a" style="left:551.6px;top:154.5px;" width="26" height="26" viewBox="-13 -13 26 26"><circle r="11" fill="none" stroke="#f2f2f2" stroke-width="1.500"/><circle r="11" fill="none" stroke="#b03030" stroke-width="1.500" stroke-dasharray="4.320 4.320"/><path d="M-7.500 0H-2M2 0H7.500M0 -7.500V-2M0 2V7.500" stroke="#b8b8b8" stroke-width="1.300"/></svg>
<svg class="a" style="left:551.6px;top:195px;" width="26" height="26" viewBox="-13 -13 26 26"><path d="M0 -11.500L3 -7H-3ZM0 11.500L3 7H-3ZM-11.500 0L-7 -3V3ZM11.500 0L7 -3V3Z" fill="#e6e6e6"/><path d="M0 -7V-3.500M0 7V3.500M-7 0H-3.500M7 0H3.500" stroke="#e6e6e6" stroke-width="1.300" stroke-dasharray="2 1"/></svg>
<svg class="a" style="left:551.6px;top:229.5px;" width="26" height="26" viewBox="-13 -13 26 26"><path d="M-8.500 -3.500A9.200 9.200 0 0 1 8 -4.500M8.500 3.500A9.200 9.200 0 0 1 -8 4.500" fill="none" stroke="#e6e6e6" stroke-width="1.300"/><path d="M-11.500 -1.500H-5.500L-8.500 3.500ZM11.500 1.500H5.500L8.500 -3.500Z" fill="#e6e6e6"/><path d="M0 -3.800L3.800 0L0 3.800L-3.800 0Z" fill="#b8b8b8"/></svg>
<svg class="a" style="left:551.6px;top:264.5px;" width="26" height="26" viewBox="-13 -13 26 26"><path d="M-8 -8H8.300V8H2" fill="none" stroke="#b8b8b8" stroke-width="1.300"/><path d="M-8 -8V-1" fill="none" stroke="#b8b8b8" stroke-width="1.300"/><rect x="-9.300" y=".3" width="9.500" height="9" fill="#e6e6e6"/><path d="M1.800 -1.800L6 -6M2.600 -6.200H6.200V-2.600" stroke="#c8c8c8" stroke-width="1.300" fill="none"/></svg>
<svg class="a" style="left:579.6px;top:288px;" width="3" height="3" viewBox="0 0 3 3"><path d="M3 0V3H0Z" fill="#9a9a9a"/></svg>
<svg class="a" style="left:551.6px;top:299.5px;" width="26" height="26" viewBox="-13 -13 26 26"><circle r="9.800" fill="none" stroke="#c8c8c8" stroke-width="1.200" stroke-dasharray="9.400 6" stroke-dashoffset="-3"/><rect x="-4.300" y="-4.300" width="8.600" height="8.600" fill="#e6e6e6"/><path d="M0 -11L3 -7H-3ZM0 11L3 7H-3ZM-11 0L-7 -3V3ZM11 0L7 -3V3Z" fill="#e6e6e6"/></svg>
<svg class="a" style="left:551.6px;top:340px;" width="26" height="26" viewBox="-13 -13 26 26"><path d="M-10.500 2L3 -11.500L7.500 -7L-6 6.500L-11.500 7.500Z" fill="#e6e6e6"/><path d="M.8 -9.300L5.300 -4.800" stroke="#232323" stroke-width="1.100"/><path d="M-10.500 8.500C-6 13 -3 9 0 5.500C3 2 8 3 11.500 8.500" fill="none" stroke="#7fc8a8" stroke-width="1.500"/></svg>
<svg class="a" style="left:579.6px;top:364px;" width="3" height="3" viewBox="0 0 3 3"><path d="M3 0V3H0Z" fill="#9a9a9a"/></svg>
<svg class="a" style="left:551.6px;top:375px;" width="26" height="26" viewBox="-13 -13 26 26"><path d="M-9 -12H-6V9H12V12H-9Z" fill="#e6e6e6"/><path d="M-8.500 -9H-7M-8.500 -6H-7M-8.500 -3H-7M-8.500 0H-7M-8.500 3H-7M-8.500 6H-7M-3 9.500V11M0 9.500V11M3 9.500V11M6 9.500V11M9 9.500V11" stroke="#232323" stroke-width=".9"/><path d="M-4.500 7.500V-1A8.500 8.500 0 0 1 4 7.500Z" fill="#7fd8b0"/><path d="M-4.500 -3.500A11 11 0 0 1 6.500 7.500" fill="none" stroke="#7fd8b0" stroke-width="1.100"/></svg>
<svg class="a" style="left:551.6px;top:415.5px;" width="26" height="26" viewBox="-13 -13 26 26"><path d="M-8 -3.500L-3 -7.500H9V5L4.500 9.500H-8ZM-8 -3.500H4.500V9.500M4.500 -3.500L9 -7.500" fill="none" stroke="#8fcfb0" stroke-width="1.300" stroke-linejoin="round"/><path d="M-10 -12.500V-6.500M-13 -9.500H-7" stroke="#7fe0b0" stroke-width="1.700"/></svg>
<svg class="a" style="left:579.6px;top:439.5px;" width="3" height="3" viewBox="0 0 3 3"><path d="M3 0V3H0Z" fill="#9a9a9a"/></svg>
<div class="t" style="left:65.0px;top:116.8px;height:16px;line-height:16px;font-size:12px;color:#f2f2f2;letter-spacing:-0.19px;text-shadow:0 0 2px #000,0 1px 2px rgba(0,0,0,.9);">User Perspective</div>
<div class="t" style="left:65.0px;top:134.8px;height:16px;line-height:16px;font-size:12px;color:#f2f2f2;letter-spacing:-0.01px;text-shadow:0 0 2px #000,0 1px 2px rgba(0,0,0,.9);">(1) Collection | Plane</div>
<div class="t" style="left:602.0px;top:116.8px;height:16px;line-height:16px;font-size:12px;color:#f2f2f2;letter-spacing:-0.28px;">Camera Perspective</div>
<div class="t" style="left:602.0px;top:134.8px;height:16px;line-height:16px;font-size:12px;color:#f2f2f2;letter-spacing:-0.01px;">(1) Collection | Plane</div>
<svg class="a" style="left:0;top:0" width="1920" height="400" viewBox="0 0 1920 400">
<line x1="203.6" y1="157.8" x2="229.5" y2="173.5" stroke="#ee3c58" stroke-width="2"/><line x1="203.6" y1="157.8" x2="223.2" y2="136.8" stroke="#6fa82a" stroke-width="2"/><line x1="203.6" y1="157.8" x2="203.6" y2="138.6" stroke="#3f8bef" stroke-width="2"/><circle cx="178.7" cy="142" r="7" fill="rgba(190,60,85,.45)" stroke="#b8405a" stroke-width="1.400"/><circle cx="184.4" cy="178.2" r="7.600" fill="#587a2c" stroke="#8bc92a" stroke-width="1.500"/><circle cx="204" cy="176.4" r="7" fill="rgba(60,100,170,.22)" stroke="#3f78c4" stroke-width="1.400"/><circle cx="203.6" cy="138.6" r="8.300" fill="#3f8bef"/><text x="203.6" y="142.6" font-family="Liberation Sans, sans-serif" font-size="11.500" font-weight="400" text-anchor="middle" fill="#14305e">Z</text><circle cx="223.2" cy="136.8" r="8" fill="#6fa82a"/><text x="223.2" y="140.8" font-family="Liberation Sans, sans-serif" font-size="11.500" font-weight="400" text-anchor="middle" fill="#1c3a08">Y</text><circle cx="229.5" cy="173.5" r="8.300" fill="#ee3c58"/><text x="229.5" y="177.5" font-family="Liberation Sans, sans-serif" font-size="11.500" font-weight="400" text-anchor="middle" fill="#5a0c1a">X</text>
<line x1="1566" y1="157.6" x2="1587" y2="167.3" stroke="#ee3c58" stroke-width="2"/><line x1="1566" y1="157.6" x2="1590.2" y2="148.5" stroke="#6fa82a" stroke-width="2"/><line x1="1566" y1="157.6" x2="1566" y2="128.5" stroke="#3f8bef" stroke-width="2"/><circle cx="1545" cy="148" r="7" fill="rgba(190,60,85,.45)" stroke="#b8405a" stroke-width="1.400"/><circle cx="1541.7" cy="166.6" r="7.600" fill="#587a2c" stroke="#8bc92a" stroke-width="1.500"/><circle cx="1565.6" cy="186.7" r="7" fill="#2f5f9f" stroke="#3f78c4" stroke-width="1.400"/><circle cx="1566" cy="128.5" r="8.300" fill="#3f8bef"/><text x="1566" y="132.5" font-family="Liberation Sans, sans-serif" font-size="11.500" font-weight="400" text-anchor="middle" fill="#14305e">Z</text><circle cx="1590.2" cy="148.5" r="8" fill="#6fa82a"/><text x="1590.2" y="152.5" font-family="Liberation Sans, sans-serif" font-size="11.500" font-weight="400" text-anchor="middle" fill="#1c3a08">Y</text><circle cx="1587" cy="167.3" r="8.300" fill="#ee3c58"/><text x="1587" y="171.3" font-family="Liberation Sans, sans-serif" font-size="11.500" font-weight="400" text-anchor="middle" fill="#5a0c1a">X</text>
<circle cx="232" cy="212" r="13.5" fill="rgba(38,38,38,.85)"/><g transform="translate(232 212)"><circle cx="1.800" cy="-1.800" r="5.600" fill="#e4e4e4"/><path d="M-2.500 2.500L-7 7" stroke="#e4e4e4" stroke-width="2.200" stroke-linecap="round"/><path d="M1.800 -4.600V1M-1 -1.800H4.600" stroke="#2a2a2a" stroke-width="1.200"/></g>
<circle cx="232" cy="242.4" r="13.5" fill="rgba(38,38,38,.85)"/><g transform="translate(232 242.4)"><path d="M-4.800 1.500V-4.500Q-4 -5.800 -3.200 -4.500V-6.500Q-2.300 -8 -1.300 -6.500V-7Q-.3 -8.400 .7 -7V-6Q1.700 -7.400 2.600 -6V-1L4.600 -3.300Q6 -4 6 -2.500L3.500 3Q2 6.500 -1 6.500Q-3.500 6.500 -5.500 4L-7.500 .5Q-7.300 -1 -6 -.2Z" fill="#e4e4e4"/><path d="M-3.200 -4.500V0M-1.300 -6V0M.7 -6V0" stroke="#2a2a2a" stroke-width=".7"/></g>
<circle cx="232" cy="273" r="13.5" fill="rgba(38,38,38,.85)"/><g transform="translate(232 273)"><circle cx="-3.800" cy="-4" r="2.800" fill="none" stroke="#e4e4e4" stroke-width="1.400"/><circle cx="2.200" cy="-4.300" r="3.200" fill="none" stroke="#e4e4e4" stroke-width="1.400"/><rect x="-5.500" y=".5" width="9" height="6" rx="1" fill="#e4e4e4"/><path d="M4.500 3.500L8 1V6.500Z" fill="#e4e4e4"/><rect x="-2.500" y="2" width="3" height="2.500" fill="#2a2a2a"/></g>
<circle cx="232" cy="302.6" r="13.5" fill="rgba(38,38,38,.85)"/><g transform="translate(232 302.6)"><path d="M-4.500 -6H4.500L7.500 6H-7.500ZM-1.500 -6L-2.500 6M1.500 -6L2.500 6M-5.500 -2H5.500M-6.500 2H6.500" fill="none" stroke="#e4e4e4" stroke-width="1.300"/></g>
<circle cx="1594" cy="212" r="13" fill="#181818"/><g transform="translate(1594 212)"><circle cx="1.800" cy="-1.800" r="5.600" fill="#e4e4e4"/><path d="M-2.500 2.500L-7 7" stroke="#e4e4e4" stroke-width="2.200" stroke-linecap="round"/><path d="M1.800 -4.600V1M-1 -1.800H4.600" stroke="#2a2a2a" stroke-width="1.200"/></g>
<circle cx="1594" cy="241.7" r="13" fill="#181818"/><g transform="translate(1594 241.7)"><path d="M-4.800 1.500V-4.500Q-4 -5.800 -3.200 -4.500V-6.500Q-2.300 -8 -1.300 -6.500V-7Q-.3 -8.400 .7 -7V-6Q1.700 -7.400 2.600 -6V-1L4.600 -3.300Q6 -4 6 -2.500L3.500 3Q2 6.500 -1 6.500Q-3.500 6.500 -5.500 4L-7.500 .5Q-7.300 -1 -6 -.2Z" fill="#e4e4e4"/><path d="M-3.200 -4.500V0M-1.300 -6V0M.7 -6V0" stroke="#2a2a2a" stroke-width=".7"/></g>
<circle cx="1594" cy="272.4" r="13" fill="#181818"/><g transform="translate(1594 272.4)"><circle cx="-3.800" cy="-4" r="2.800" fill="none" stroke="#e4e4e4" stroke-width="1.400"/><circle cx="2.200" cy="-4.300" r="3.200" fill="none" stroke="#e4e4e4" stroke-width="1.400"/><rect x="-5.500" y=".5" width="9" height="6" rx="1" fill="#e4e4e4"/><path d="M4.500 3.500L8 1V6.500Z" fill="#e4e4e4"/><rect x="-2.500" y="2" width="3" height="2.500" fill="#2a2a2a"/></g>
<circle cx="1594" cy="303" r="13" fill="#181818"/><g transform="translate(1594 303)"><rect x="-5.500" y="-1" width="11" height="8" rx="1" fill="none" stroke="#e4e4e4" stroke-width="1.400"/><path d="M-3.500 -1V-4A3.300 3.300 0 0 1 3 -4.500" fill="none" stroke="#e4e4e4" stroke-width="1.400"/><rect x="-.8" y="2" width="1.600" height="2.500" fill="#e4e4e4"/></g>
</svg>
<div class="a" style="left:1608.5px;top:129px;width:7.5px;height:19px;background:#1d1d1d;border-radius:4px 0 0 4px;"></div>
<svg class="a" style="left:1608.5px;top:133.5px;" width="8" height="10" viewBox="0 0 8 10"><path d="M5.500 1.500L2 5L5.500 8.500" fill="none" stroke="#b0b0b0" stroke-width="1.200"/></svg>
<div class="a" style="left:513px;top:108px;width:21px;height:960px;background:#1a1a1a;border-radius:0px;"></div>
<div class="a" style="left:513px;top:113px;width:16.5px;height:40px;background:#3c3c3c;border-radius:0 4px 4px 0;"></div>
<div class="a" style="left:513px;top:158px;width:16.5px;height:39.5px;background:#282828;border-radius:0 4px 4px 0;box-shadow:inset 0 0 0 1px #3a3a3a;"></div>
<div class="a" style="left:513px;top:202px;width:16.5px;height:41px;background:#282828;border-radius:0 4px 4px 0;box-shadow:inset 0 0 0 1px #3a3a3a;"></div>
<div class="t" style="left:501.2px;top:125px;width:40px;height:16px;line-height:16px;font-size:12px;text-align:center;color:#f0f0f0;transform:rotate(90deg);transform-origin:50% 50%;">Item</div>
<div class="t" style="left:501.2px;top:170px;width:40px;height:16px;line-height:16px;font-size:12px;text-align:center;color:#d0d0d0;transform:rotate(90deg);transform-origin:50% 50%;">Tool</div>
<div class="t" style="left:501.2px;top:214.5px;width:40px;height:16px;line-height:16px;font-size:12px;text-align:center;color:#d0d0d0;transform:rotate(90deg);transform-origin:50% 50%;">View</div>
<div class="a" style="left:262px;top:108.5px;width:243.5px;height:389px;background:#3c3c3c;border-radius:4px;"></div>
<svg class="a" style="left:0;top:0" width="1" height="1"><path d="M271.4 121.5 L275.0 125.5 L278.6 121.5" fill="none" stroke="#d8d8d8" stroke-width="1.2" stroke-linecap="round" stroke-linejoin="round"/></svg>
<div class="t" style="left:284.5px;top:116.2px;height:16px;line-height:16px;font-size:12px;color:#ececec;letter-spacing:-0.03px;">Transform</div>
<svg class="a" style="left:485px;top:121px;" width="12" height="5" viewBox="0 0 12 5"><g fill="#707070"><rect x="0" y="0" width="1.300" height="1.300"/><rect x="3.200" y="0" width="1.300" height="1.300"/><rect x="6.400" y="0" width="1.300" height="1.300"/><rect x="9.600" y="0" width="1.300" height="1.300"/><rect x="0" y="3.200" width="1.300" height="1.300"/><rect x="3.200" y="3.200" width="1.300" height="1.300"/><rect x="6.400" y="3.200" width="1.300" height="1.300"/><rect x="9.600" y="3.200" width="1.300" height="1.300"/></g></svg>
<div class="t" style="left:271.5px;top:145.8px;height:16px;line-height:16px;font-size:12px;color:#c6c6c6;">Location:</div>
<div class="a" style="left:271px;top:164px;width:173.7px;height:18.1px;background:#545454;border-radius:4px 4px 0 0;"></div>
<div class="t" style="left:286.5px;top:166.1px;height:16px;line-height:16px;font-size:12px;color:#e6e6e6;">X</div>
<div class="t" style="right:1488.5px;top:166.1px;height:16px;line-height:16px;font-size:12px;color:#e6e6e6;">-2.2951 m</div>
<svg class="a" style="left:468px;top:165.55px;" width="16" height="14" viewBox="0 0 16 14"><path d="M1.200 6.500V4.300A2.600 2.600 0 0 1 6.400 4.300V7" fill="none" stroke="#c4c4c4" stroke-width="1.100"/><rect x="5.300" y="7" width="8.800" height="5.800" rx=".8" fill="none" stroke="#c4c4c4" stroke-width="1.100"/><rect x="8.300" y="9" width="2.800" height="1.800" fill="#c4c4c4"/></svg>
<div class="a" style="left:271px;top:183.73px;width:173.7px;height:18.1px;background:#545454;border-radius:0;"></div>
<div class="t" style="left:286.5px;top:185.8px;height:16px;line-height:16px;font-size:12px;color:#e6e6e6;">Y</div>
<div class="t" style="right:1488.5px;top:185.8px;height:16px;line-height:16px;font-size:12px;color:#e6e6e6;">-10.776 m</div>
<svg class="a" style="left:468px;top:185.28px;" width="16" height="14" viewBox="0 0 16 14"><path d="M1.200 6.500V4.300A2.600 2.600 0 0 1 6.400 4.300V7" fill="none" stroke="#c4c4c4" stroke-width="1.100"/><rect x="5.300" y="7" width="8.800" height="5.800" rx=".8" fill="none" stroke="#c4c4c4" stroke-width="1.100"/><rect x="8.300" y="9" width="2.800" height="1.800" fill="#c4c4c4"/></svg>
<div class="a" style="left:271px;top:203.46px;width:173.7px;height:18.1px;background:#545454;border-radius:0 0 4px 4px;"></div>
<div class="t" style="left:286.5px;top:205.6px;height:16px;line-height:16px;font-size:12px;color:#e6e6e6;">Z</div>
<div class="t" style="right:1488.5px;top:205.6px;height:16px;line-height:16px;font-size:12px;color:#e6e6e6;">0 m</div>
<svg class="a" style="left:468px;top:205.01px;" width="16" height="14" viewBox="0 0 16 14"><path d="M1.200 6.500V4.300A2.600 2.600 0 0 1 6.400 4.300V7" fill="none" stroke="#c4c4c4" stroke-width="1.100"/><rect x="5.300" y="7" width="8.800" height="5.800" rx=".8" fill="none" stroke="#c4c4c4" stroke-width="1.100"/><rect x="8.300" y="9" width="2.800" height="1.800" fill="#c4c4c4"/></svg>
<div class="t" style="left:271.5px;top:227.8px;height:16px;line-height:16px;font-size:12px;color:#c6c6c6;">Rotation:</div>
<div class="a" style="left:271px;top:245.8px;width:173.7px;height:18.1px;background:#545454;border-radius:4px 4px 0 0;"></div>
<div class="t" style="left:286.5px;top:247.9px;height:16px;line-height:16px;font-size:12px;color:#e6e6e6;">X</div>
<div class="t" style="right:1488.5px;top:247.9px;height:16px;line-height:16px;font-size:12px;color:#e6e6e6;">0°</div>
<svg class="a" style="left:468px;top:247.35px;" width="16" height="14" viewBox="0 0 16 14"><path d="M1.200 6.500V4.300A2.600 2.600 0 0 1 6.400 4.300V7" fill="none" stroke="#c4c4c4" stroke-width="1.100"/><rect x="5.300" y="7" width="8.800" height="5.800" rx=".8" fill="none" stroke="#c4c4c4" stroke-width="1.100"/><rect x="8.300" y="9" width="2.800" height="1.800" fill="#c4c4c4"/></svg>
<div class="a" style="left:271px;top:265.53px;width:173.7px;height:18.1px;background:#545454;border-radius:0;"></div>
<div class="t" style="left:286.5px;top:267.6px;height:16px;line-height:16px;font-size:12px;color:#e6e6e6;">Y</div>
<div class="t" style="right:1488.5px;top:267.6px;height:16px;line-height:16px;font-size:12px;color:#e6e6e6;">0°</div>
<svg class="a" style="left:468px;top:267.08px;" width="16" height="14" viewBox="0 0 16 14"><path d="M1.200 6.500V4.300A2.600 2.600 0 0 1 6.400 4.300V7" fill="none" stroke="#c4c4c4" stroke-width="1.100"/><rect x="5.300" y="7" width="8.800" height="5.800" rx=".8" fill="none" stroke="#c4c4c4" stroke-width="1.100"/><rect x="8.300" y="9" width="2.800" height="1.800" fill="#c4c4c4"/></svg>
<div class="a" style="left:271px;top:285.26px;width:173.7px;height:18.1px;background:#545454;border-radius:0 0 4px 4px;"></div>
<div class="t" style="left:286.5px;top:287.4px;height:16px;line-height:16px;font-size:12px;color:#e6e6e6;">Z</div>
<div class="t" style="right:1488.5px;top:287.4px;height:16px;line-height:16px;font-size:12px;color:#e6e6e6;">0°</div>
<svg class="a" style="left:468px;top:286.81px;" width="16" height="14" viewBox="0 0 16 14"><path d="M1.200 6.500V4.300A2.600 2.600 0 0 1 6.400 4.300V7" fill="none" stroke="#c4c4c4" stroke-width="1.100"/><rect x="5.300" y="7" width="8.800" height="5.800" rx=".8" fill="none" stroke="#c4c4c4" stroke-width="1.100"/><rect x="8.300" y="9" width="2.800" height="1.800" fill="#c4c4c4"/></svg>
<div class="a" style="left:271px;top:307.8px;width:225.8px;height:17.2px;background:#282828;border-radius:4px;"></div>
<div class="t" style="left:278.0px;top:309.4px;height:16px;line-height:16px;font-size:12px;color:#e6e6e6;letter-spacing:-0.34px;">XYZ Euler</div>
<svg class="a" style="left:0;top:0" width="1" height="1"><path d="M487.7 315.5 L490.5 318.5 L493.3 315.5" fill="none" stroke="#d0d0d0" stroke-width="1.4" stroke-linecap="round" stroke-linejoin="round"/></svg>
<div class="t" style="left:271.5px;top:331.2px;height:16px;line-height:16px;font-size:12px;color:#c6c6c6;">Scale:</div>
<div class="a" style="left:271px;top:349.8px;width:173.7px;height:18.1px;background:#545454;border-radius:4px 4px 0 0;"></div>
<div class="t" style="left:286.5px;top:351.9px;height:16px;line-height:16px;font-size:12px;color:#e6e6e6;">X</div>
<div class="t" style="right:1488.5px;top:351.9px;height:16px;line-height:16px;font-size:12px;color:#e6e6e6;">15.192</div>
<svg class="a" style="left:468px;top:351.35px;" width="16" height="14" viewBox="0 0 16 14"><path d="M1.200 6.500V4.300A2.600 2.600 0 0 1 6.400 4.300V7" fill="none" stroke="#c4c4c4" stroke-width="1.100"/><rect x="5.300" y="7" width="8.800" height="5.800" rx=".8" fill="none" stroke="#c4c4c4" stroke-width="1.100"/><rect x="8.300" y="9" width="2.800" height="1.800" fill="#c4c4c4"/></svg>
<div class="a" style="left:271px;top:369.53px;width:173.7px;height:18.1px;background:#545454;border-radius:0;"></div>
<div class="t" style="left:286.5px;top:371.6px;height:16px;line-height:16px;font-size:12px;color:#e6e6e6;">Y</div>
<div class="t" style="right:1488.5px;top:371.6px;height:16px;line-height:16px;font-size:12px;color:#e6e6e6;">15.192</div>
<svg class="a" style="left:468px;top:371.08px;" width="16" height="14" viewBox="0 0 16 14"><path d="M1.200 6.500V4.300A2.600 2.600 0 0 1 6.400 4.300V7" fill="none" stroke="#c4c4c4" stroke-width="1.100"/><rect x="5.300" y="7" width="8.800" height="5.800" rx=".8" fill="none" stroke="#c4c4c4" stroke-width="1.100"/><rect x="8.300" y="9" width="2.800" height="1.800" fill="#c4c4c4"/></svg>
<div class="a" style="left:271px;top:389.26px;width:173.7px;height:18.1px;background:#545454;border-radius:0 0 4px 4px;"></div>
<div class="t" style="left:286.5px;top:391.4px;height:16px;line-height:16px;font-size:12px;color:#e6e6e6;">Z</div>
<div class="t" style="right:1488.5px;top:391.4px;height:16px;line-height:16px;font-size:12px;color:#e6e6e6;">15.192</div>
<svg class="a" style="left:468px;top:390.81px;" width="16" height="14" viewBox="0 0 16 14"><path d="M1.200 6.500V4.300A2.600 2.600 0 0 1 6.400 4.300V7" fill="none" stroke="#c4c4c4" stroke-width="1.100"/><rect x="5.300" y="7" width="8.800" height="5.800" rx=".8" fill="none" stroke="#c4c4c4" stroke-width="1.100"/><rect x="8.300" y="9" width="2.800" height="1.800" fill="#c4c4c4"/></svg>
<div class="t" style="left:271.5px;top:413.8px;height:16px;line-height:16px;font-size:12px;color:#c6c6c6;">Dimensions:</div>
<div class="a" style="left:271px;top:432px;width:225.8px;height:18.1px;background:#545454;border-radius:4px 4px 0 0;"></div>
<div class="t" style="left:286.5px;top:434.1px;height:16px;line-height:16px;font-size:12px;color:#e6e6e6;">X</div>
<div class="t" style="right:1436.4px;top:434.1px;height:16px;line-height:16px;font-size:12px;color:#e6e6e6;">54.8 m</div>
<div class="a" style="left:271px;top:451.73px;width:225.8px;height:18.1px;background:#545454;border-radius:0;"></div>
<div class="t" style="left:286.5px;top:453.8px;height:16px;line-height:16px;font-size:12px;color:#e6e6e6;">Y</div>
<div class="t" style="right:1436.4px;top:453.8px;height:16px;line-height:16px;font-size:12px;color:#e6e6e6;">38.6 m</div>
<div class="a" style="left:271px;top:471.46px;width:225.8px;height:18.1px;background:#545454;border-radius:0 0 4px 4px;"></div>
<div class="t" style="left:286.5px;top:473.6px;height:16px;line-height:16px;font-size:12px;color:#e6e6e6;">Z</div>
<div class="t" style="right:1436.4px;top:473.6px;height:16px;line-height:16px;font-size:12px;color:#e6e6e6;">0 m</div>
<div class="a" style="left:1582.5px;top:33.5px;width:30.5px;height:18.5px;background:#1c1c1c;border-radius:4px 0 0 4px;box-shadow:inset 0 0 0 1px #343434;"></div>
<svg class="a" style="left:1585.5px;top:35px;" width="15" height="15" viewBox="0 0 16 16"><path d="M5 1.500L8.500 11H1.500Z" fill="#e0e0e0"/><circle cx="11.500" cy="4" r="2" fill="#e0e0e0"/><circle cx="10.500" cy="11" r="3.200" fill="none" stroke="#e0e0e0" stroke-width="1.200"/><circle cx="10.500" cy="11" r="1" fill="#e0e0e0"/></svg>
<svg class="a" style="left:0;top:0" width="1" height="1"><path d="M1603.4 41.8 L1606.5 45.2 L1609.6 41.8" fill="none" stroke="#d0d0d0" stroke-width="1.4" stroke-linecap="round" stroke-linejoin="round"/></svg>
<div class="a" style="left:1613px;top:33.5px;width:100.5px;height:18.5px;background:#1c1c1c;border-radius:0px;box-shadow:inset 0 0 0 1px #343434;"></div>
<div class="t" style="left:1621.0px;top:36.0px;height:16px;line-height:16px;font-size:12px;color:#e3e3e3;letter-spacing:-0.46px;">Scene</div>
<svg class="a" style="left:1694.5px;top:35.5px;" width="14.5" height="14.5" viewBox="0 0 16 16"><path d="M9.500 1.500L14.500 6.500L13 7L10.500 9.500L10 12.500L3.500 6L6.500 5.500L9 3Z" fill="none" stroke="#a8a8a8" stroke-width="1.100" stroke-linejoin="round"/><path d="M6.500 9.500L1.500 14.500" stroke="#a8a8a8" stroke-width="1.200"/></svg>
<div class="a" style="left:1713.5px;top:33.5px;width:19.8px;height:18.5px;background:#4a4a4a;border-radius:0px;"></div>
<svg class="a" style="left:1716px;top:35.5px;" width="14.5" height="14.5" viewBox="0 0 16 16"><path d="M5.500 1.500H11L14.500 5V11.500H5.500Z" fill="none" stroke="#e0e0e0" stroke-width="1.200"/><path d="M10.500 1.500V5.500H14.500" fill="none" stroke="#e0e0e0" stroke-width="1.100"/><path d="M3.500 4.500H1.500V14.500H10.500V12.500" fill="none" stroke="#e0e0e0" stroke-width="1.200"/></svg>
<div class="a" style="left:1733.8px;top:33.5px;width:19.2px;height:18.5px;background:#323232;border-radius:0 4px 4px 0;"></div>
<svg class="a" style="left:1736px;top:35.5px;" width="14.5" height="14.5" viewBox="0 0 16 16"><path d="M4.500 4.500L11.500 11.500M11.500 4.500L4.500 11.500" stroke="#4e4e4e" stroke-width="1.200"/></svg>
<div class="a" style="left:1759.3px;top:33.5px;width:31.3px;height:18.5px;background:#1c1c1c;border-radius:4px 0 0 4px;box-shadow:inset 0 0 0 1px #343434;"></div>
<svg class="a" style="left:1762.5px;top:35px;" width="15" height="15" viewBox="0 0 16 16"><rect x="5" y="1" width="10" height="10" rx="1" fill="none" stroke="#e0e0e0" stroke-width="1.100"/><path d="M6.500 9.500L9.500 5L11 7.500L12 6.500L13.500 9.500Z" fill="#e0e0e0"/><rect x="11.500" y="2.500" width="2" height="2" fill="#e0e0e0"/><path d="M3 3.500V13H12.500M1 5.500V15H10.500" fill="none" stroke="#e0e0e0" stroke-width="1.100"/></svg>
<svg class="a" style="left:0;top:0" width="1" height="1"><path d="M1780.9 41.8 L1784.0 45.2 L1787.1 41.8" fill="none" stroke="#d0d0d0" stroke-width="1.4" stroke-linecap="round" stroke-linejoin="round"/></svg>
<div class="a" style="left:1790.6px;top:33.5px;width:79.6px;height:18.5px;background:#1c1c1c;border-radius:0px;box-shadow:inset 0 0 0 1px #343434;"></div>
<div class="t" style="left:1798.0px;top:36.0px;height:16px;line-height:16px;font-size:12px;color:#e3e3e3;letter-spacing:-0.23px;">ViewLayer</div>
<div class="a" style="left:1870.2px;top:33.5px;width:19.8px;height:18.5px;background:#4a4a4a;border-radius:0px;"></div>
<svg class="a" style="left:1872.7px;top:35.5px;" width="14.5" height="14.5" viewBox="0 0 16 16"><path d="M5.500 1.500H11L14.500 5V11.500H5.500Z" fill="none" stroke="#e0e0e0" stroke-width="1.200"/><path d="M10.500 1.500V5.500H14.500" fill="none" stroke="#e0e0e0" stroke-width="1.100"/><path d="M3.500 4.500H1.500V14.500H10.500V12.500" fill="none" stroke="#e0e0e0" stroke-width="1.200"/></svg>
<div class="a" style="left:1890.5px;top:33.5px;width:19.7px;height:18.5px;background:#323232;border-radius:0 4px 4px 0;"></div>
<svg class="a" style="left:1893px;top:35.5px;" width="14.5" height="14.5" viewBox="0 0 16 16"><path d="M4.500 4.500L11.500 11.500M11.500 4.500L4.500 11.500" stroke="#4e4e4e" stroke-width="1.200"/></svg>
<div class="a" style="left:1620px;top:56px;width:297px;height:28px;background:#2b2b2b;border-radius:5px 5px 0 0;"></div>
<div class="a" style="left:1630.2px;top:59.2px;width:30.4px;height:18.3px;background:#262626;border-radius:4px;box-shadow:inset 0 0 0 1px #3a3a3a;"></div>
<svg class="a" style="left:1633.5px;top:60.8px;" width="15" height="15" viewBox="0 0 16 16"><rect x="1" y="1" width="5" height="2.600" fill="#e0e0e0"/><rect x="7" y="6.500" width="8" height="2.600" fill="#e0e0e0"/><rect x="7" y="11.500" width="8" height="2.600" fill="#e0e0e0"/><path d="M3 3.600V12.800H7M3 7.800H7" fill="none" stroke="#e0e0e0" stroke-width="1.100"/></svg>
<svg class="a" style="left:0;top:0" width="1" height="1"><path d="M1651.4 66.8 L1654.5 70.2 L1657.6 66.8" fill="none" stroke="#d0d0d0" stroke-width="1.4" stroke-linecap="round" stroke-linejoin="round"/></svg>
<div class="a" style="left:1666.3px;top:59.2px;width:31.7px;height:18.3px;background:#262626;border-radius:4px;box-shadow:inset 0 0 0 1px #3a3a3a;"></div>
<svg class="a" style="left:1669.5px;top:60.8px;" width="15" height="15" viewBox="0 0 16 16"><rect x="5" y="1" width="10" height="10" rx="1" fill="none" stroke="#e0e0e0" stroke-width="1.100"/><path d="M6.500 9.500L9.500 5L11 7.500L12 6.500L13.500 9.500Z" fill="#e0e0e0"/><rect x="11.500" y="2.500" width="2" height="2" fill="#e0e0e0"/><path d="M3 3.500V13H12.500M1 5.500V15H10.500" fill="none" stroke="#e0e0e0" stroke-width="1.100"/></svg>
<svg class="a" style="left:0;top:0" width="1" height="1"><path d="M1688.4 66.8 L1691.5 70.2 L1694.6 66.8" fill="none" stroke="#d0d0d0" stroke-width="1.4" stroke-linecap="round" stroke-linejoin="round"/></svg>
<div class="a" style="left:1714.5px;top:59.2px;width:117.7px;height:18.3px;background:#1d1d1d;border-radius:4px;box-shadow:inset 0 0 0 1px #3a3a3a;"></div>
<svg class="a" style="left:1718.5px;top:60.8px;" width="15" height="15" viewBox="0 0 16 16"><circle cx="9.500" cy="6.500" r="4.600" fill="none" stroke="#d0d0d0" stroke-width="1.300"/><path d="M6 10L1.500 14.500" stroke="#d0d0d0" stroke-width="1.500" stroke-linecap="round"/></svg>
<div class="t" style="left:1740.6px;top:61.0px;height:16px;line-height:16px;font-size:12px;color:#6e6e6e;letter-spacing:-0.60px;">Search</div>
<div class="a" style="left:1854px;top:59.2px;width:31.2px;height:18.3px;background:#262626;border-radius:4px;box-shadow:inset 0 0 0 1px #3a3a3a;"></div>
<svg class="a" style="left:1857px;top:60.8px;" width="15" height="15" viewBox="0 0 16 16"><path d="M1.500 2H14.500L9.500 8V13.500L6.500 15V8Z" fill="none" stroke="#e0e0e0" stroke-width="1.300" stroke-linejoin="round"/></svg>
<svg class="a" style="left:0;top:0" width="1" height="1"><path d="M1875.9 66.8 L1879.0 70.2 L1882.1 66.8" fill="none" stroke="#d0d0d0" stroke-width="1.4" stroke-linecap="round" stroke-linejoin="round"/></svg>
<div class="a" style="left:1891.5px;top:59.2px;width:18.7px;height:18.3px;background:#4a4a4a;border-radius:4px;"></div>
<svg class="a" style="left:1893.3px;top:60.8px;" width="15" height="15" viewBox="0 0 16 16"><rect x="1" y="4" width="10" height="2.600" fill="none" stroke="#e0e0e0" stroke-width="1"/><path d="M2 7V14.500H10V9" fill="none" stroke="#e0e0e0" stroke-width="1"/><rect x="4.500" y="9" width="3" height="1.200" fill="#e0e0e0"/><circle cx="12" cy="4" r="3.500" fill="#e0e0e0"/><path d="M12 2V6M10 4H14" stroke="#4a4a4a" stroke-width="1.100"/></svg>
<div class="a" style="left:1620px;top:104px;width:297px;height:20px;background:#2b2b2b;border-radius:0px;"></div>
<div class="a" style="left:1620px;top:144px;width:297px;height:20px;background:#2b2b2b;border-radius:0px;"></div>
<div class="a" style="left:1620px;top:184px;width:297px;height:20px;background:#2b2b2b;border-radius:0px;"></div>
<div class="a" style="left:1620px;top:224px;width:297px;height:20px;background:#2b2b2b;border-radius:0px;"></div>
<div class="a" style="left:1620px;top:264px;width:297px;height:20px;background:#2b2b2b;border-radius:0px;"></div>
<div class="a" style="left:1620px;top:304px;width:297px;height:20px;background:#2b2b2b;border-radius:0px;"></div>
<div class="a" style="left:1620px;top:344px;width:297px;height:20px;background:#2b2b2b;border-radius:0px;"></div>
<div class="a" style="left:1620px;top:384px;width:297px;height:20px;background:#2b2b2b;border-radius:0px;"></div>
<svg class="a" style="left:1644px;top:85px;" width="14.5" height="14.5" viewBox="0 0 16 16"><rect x="1" y="1.500" width="14" height="4" fill="#e0e0e0"/><path d="M2 6.500H14V14.500H2Z" fill="#e0e0e0"/><rect x="6" y="8.500" width="4" height="1.600" fill="#282828"/></svg>
<div class="t" style="left:1665.4px;top:86.8px;height:16px;line-height:16px;font-size:12px;color:#d6d6d6;letter-spacing:-0.16px;">Scene Collection</div>
<svg class="a" style="left:0;top:0" width="1" height="1"><path d="M1647.1 111.9 L1651.0 116.1 L1654.9 111.9" fill="none" stroke="#b0b0b0" stroke-width="1.2" stroke-linecap="round" stroke-linejoin="round"/></svg>
<div class="a" style="left:1661px;top:103.5px;width:20px;height:19px;background:#555;border-radius:5px;"></div>
<svg class="a" style="left:1663.7px;top:105.5px;" width="14.5" height="14.5" viewBox="0 0 16 16"><rect x="1" y="1.500" width="14" height="4" fill="#ededed"/><path d="M2 6.500H14V14.500H2Z" fill="#ededed"/><rect x="6" y="8.500" width="4" height="1.600" fill="#282828"/></svg>
<div class="t" style="left:1685.2px;top:106.8px;height:16px;line-height:16px;font-size:12px;color:#f4f4f4;letter-spacing:0.03px;">Collection</div>
<svg class="a" style="left:1853.5px;top:107.3px;" width="11" height="10.5" viewBox="0 0 11 10.5"><rect x="0" y="0" width="11" height="10.500" rx="1.500" fill="#e6e6e6"/><path d="M2.300 5.300L4.700 7.600L8.800 2.600" fill="none" stroke="#282828" stroke-width="1.600"/></svg>
<div class="a" style="left:1650px;top:128px;width:1px;height:129px;background:#4a4a4a;border-radius:0px;"></div>
<svg class="a" style="left:1667.5px;top:129px;" width="8" height="10" viewBox="0 0 8 10"><path d="M2.500 1.500L6 5L2.500 8.500" fill="none" stroke="#b0b0b0" stroke-width="1.200" stroke-linecap="round" stroke-linejoin="round"/></svg>
<svg class="a" style="left:1683.3px;top:125px;" width="15" height="15" viewBox="0 0 16 16"><circle cx="4.300" cy="4.300" r="3.300" fill="#e89a55"/><circle cx="10.500" cy="4.800" r="2.800" fill="#e89a55"/><circle cx="4.300" cy="4.300" r="1.100" fill="#282828"/><circle cx="10.500" cy="4.800" r="1" fill="#282828"/><rect x="2" y="8" width="9.500" height="6" rx="1" fill="#e89a55"/><path d="M12 11L15.500 8.500V14Z" fill="#e89a55"/><rect x="0" y="9.500" width="1.500" height="3" fill="#e89a55"/></svg>
<div class="t" style="left:1705.3px;top:126.8px;height:16px;line-height:16px;font-size:12px;color:#d6d6d6;letter-spacing:-0.60px;">Camera</div>
<svg class="a" style="left:1667.5px;top:149px;" width="8" height="10" viewBox="0 0 8 10"><path d="M2.500 1.500L6 5L2.500 8.500" fill="none" stroke="#b0b0b0" stroke-width="1.200" stroke-linecap="round" stroke-linejoin="round"/></svg>
<svg class="a" style="left:1683.3px;top:145px;" width="15" height="15" viewBox="0 0 16 16"><path d="M2 2.500H14L8 14Z" fill="none" stroke="#e89a55" stroke-width="2.800" stroke-linejoin="round"/></svg>
<div class="t" style="left:1705.3px;top:146.8px;height:16px;line-height:16px;font-size:12px;color:#d6d6d6;letter-spacing:-0.10px;">Cylinder</div>
<svg class="a" style="left:1683.3px;top:165px;" width="15" height="15" viewBox="0 0 16 16"><path d="M8 1.500V9.500M8 9.500L1.500 14M8 9.500L14.500 11.500" fill="none" stroke="#e89a55" stroke-width="2" stroke-linecap="round"/></svg>
<div class="t" style="left:1705.3px;top:166.8px;height:16px;line-height:16px;font-size:12px;color:#d6d6d6;letter-spacing:-0.18px;">Empty</div>
<svg class="a" style="left:1667.5px;top:189px;" width="8" height="10" viewBox="0 0 8 10"><path d="M2.500 1.500L6 5L2.500 8.500" fill="none" stroke="#b0b0b0" stroke-width="1.200" stroke-linecap="round" stroke-linejoin="round"/></svg>
<svg class="a" style="left:1683.3px;top:185px;" width="15" height="15" viewBox="0 0 16 16"><path d="M8 1A5.300 5.300 0 0 0 4.500 10.200V11.500H11.500V10.200A5.300 5.300 0 0 0 8 1Z" fill="#e89a55"/><rect x="5" y="12.300" width="6" height="1.300" fill="#e89a55"/><rect x="6" y="14.200" width="4" height="1.300" fill="#e89a55"/><path d="M6.300 10.500V6.500M9.700 10.500V6.500M6.300 7.500H9.700" stroke="#282828" stroke-width="1" fill="none"/></svg>
<div class="t" style="left:1705.3px;top:186.8px;height:16px;line-height:16px;font-size:12px;color:#d6d6d6;letter-spacing:-0.01px;">Light</div>
<svg class="a" style="left:1667.5px;top:209px;" width="8" height="10" viewBox="0 0 8 10"><path d="M2.500 1.500L6 5L2.500 8.500" fill="none" stroke="#b0b0b0" stroke-width="1.200" stroke-linecap="round" stroke-linejoin="round"/></svg>
<div class="a" style="left:1681px;top:203.5px;width:19.6px;height:18.5px;background:#555;border-radius:5px;"></div>
<svg class="a" style="left:1683.3px;top:205px;" width="15" height="15" viewBox="0 0 16 16"><path d="M2 2.500H14L8 14Z" fill="none" stroke="#e89a55" stroke-width="2.800" stroke-linejoin="round"/></svg>
<div class="t" style="left:1705.3px;top:206.8px;height:16px;line-height:16px;font-size:12px;color:#d6d6d6;letter-spacing:-0.57px;">Plane</div>
<svg class="a" style="left:1667.5px;top:229px;" width="8" height="10" viewBox="0 0 8 10"><path d="M2.500 1.500L6 5L2.500 8.500" fill="none" stroke="#b0b0b0" stroke-width="1.200" stroke-linecap="round" stroke-linejoin="round"/></svg>
<svg class="a" style="left:1683.3px;top:225px;" width="15" height="15" viewBox="0 0 16 16"><path d="M2 2.500H14L8 14Z" fill="none" stroke="#e89a55" stroke-width="2.800" stroke-linejoin="round"/></svg>
<div class="t" style="left:1705.3px;top:226.8px;height:16px;line-height:16px;font-size:12px;color:#d6d6d6;letter-spacing:-0.32px;">Plane.001</div>
<svg class="a" style="left:1667.5px;top:249px;" width="8" height="10" viewBox="0 0 8 10"><path d="M2.500 1.500L6 5L2.500 8.500" fill="none" stroke="#b0b0b0" stroke-width="1.200" stroke-linecap="round" stroke-linejoin="round"/></svg>
<svg class="a" style="left:1683.3px;top:245px;" width="15" height="15" viewBox="0 0 16 16"><path d="M2 2.500H14L8 14Z" fill="none" stroke="#e89a55" stroke-width="2.800" stroke-linejoin="round"/></svg>
<div class="t" style="left:1705.3px;top:246.8px;height:16px;line-height:16px;font-size:12px;color:#d6d6d6;letter-spacing:-0.40px;">Sphere</div>
<svg class="a" style="left:1872.2px;top:105.3px;" width="14" height="14" viewBox="0 0 16 16"><path d="M.8 8C3.500 3 12.500 3 15.200 8C12.500 13 3.500 13 .8 8Z" fill="none" stroke="#e0e0e0" stroke-width="1.700"/><circle cx="8" cy="8" r="3.200" fill="#e0e0e0"/><circle cx="8" cy="8" r="1.300" fill="#282828"/></svg>
<svg class="a" style="left:1892.2px;top:105.1px;" width="14" height="14" viewBox="0 0 16 16"><path d="M.5 4H4L5.200 2H10.800L12 4H15.500V14H.5Z" fill="#e0e0e0"/><circle cx="8" cy="9" r="3.800" fill="#282828"/><circle cx="8" cy="9" r="2.300" fill="none" stroke="#e0e0e0" stroke-width="1.200"/></svg>
<svg class="a" style="left:1872.2px;top:125.3px;" width="14" height="14" viewBox="0 0 16 16"><path d="M.8 8C3.500 3 12.500 3 15.200 8C12.500 13 3.500 13 .8 8Z" fill="none" stroke="#e0e0e0" stroke-width="1.700"/><circle cx="8" cy="8" r="3.200" fill="#e0e0e0"/><circle cx="8" cy="8" r="1.300" fill="#282828"/></svg>
<svg class="a" style="left:1892.2px;top:125.1px;" width="14" height="14" viewBox="0 0 16 16"><path d="M.5 4H4L5.200 2H10.800L12 4H15.500V14H.5Z" fill="#e0e0e0"/><circle cx="8" cy="9" r="3.800" fill="#282828"/><circle cx="8" cy="9" r="2.300" fill="none" stroke="#e0e0e0" stroke-width="1.200"/></svg>
<svg class="a" style="left:1872.2px;top:145.3px;" width="14" height="14" viewBox="0 0 16 16"><path d="M.8 8C3.500 3 12.500 3 15.200 8C12.500 13 3.500 13 .8 8Z" fill="none" stroke="#e0e0e0" stroke-width="1.700"/><circle cx="8" cy="8" r="3.200" fill="#e0e0e0"/><circle cx="8" cy="8" r="1.300" fill="#282828"/></svg>
<svg class="a" style="left:1892.2px;top:145.1px;" width="14" height="14" viewBox="0 0 16 16"><path d="M.5 4H4L5.200 2H10.800L12 4H15.500V14H.5Z" fill="#e0e0e0"/><circle cx="8" cy="9" r="3.800" fill="#282828"/><circle cx="8" cy="9" r="2.300" fill="none" stroke="#e0e0e0" stroke-width="1.200"/></svg>
<svg class="a" style="left:1872.2px;top:165.3px;" width="14" height="14" viewBox="0 0 16 16"><path d="M.8 8C3.500 3 12.500 3 15.200 8C12.500 13 3.500 13 .8 8Z" fill="none" stroke="#e0e0e0" stroke-width="1.700"/><circle cx="8" cy="8" r="3.200" fill="#e0e0e0"/><circle cx="8" cy="8" r="1.300" fill="#282828"/></svg>
<svg class="a" style="left:1892.2px;top:165.1px;" width="14" height="14" viewBox="0 0 16 16"><path d="M.5 4H4L5.200 2H10.800L12 4H15.500V14H.5Z" fill="#e0e0e0"/><circle cx="8" cy="9" r="3.800" fill="#282828"/><circle cx="8" cy="9" r="2.300" fill="none" stroke="#e0e0e0" stroke-width="1.200"/></svg>
<svg class="a" style="left:1872.2px;top:185.3px;" width="14" height="14" viewBox="0 0 16 16"><path d="M.8 8C3.500 3 12.500 3 15.200 8C12.500 13 3.500 13 .8 8Z" fill="none" stroke="#e0e0e0" stroke-width="1.700"/><circle cx="8" cy="8" r="3.200" fill="#e0e0e0"/><circle cx="8" cy="8" r="1.300" fill="#282828"/></svg>
<svg class="a" style="left:1892.2px;top:185.1px;" width="14" height="14" viewBox="0 0 16 16"><path d="M.5 4H4L5.200 2H10.800L12 4H15.500V14H.5Z" fill="#e0e0e0"/><circle cx="8" cy="9" r="3.800" fill="#282828"/><circle cx="8" cy="9" r="2.300" fill="none" stroke="#e0e0e0" stroke-width="1.200"/></svg>
<svg class="a" style="left:1872.2px;top:205.3px;" width="14" height="14" viewBox="0 0 16 16"><path d="M.8 8C3.500 3 12.500 3 15.200 8C12.500 13 3.500 13 .8 8Z" fill="none" stroke="#e0e0e0" stroke-width="1.700"/><circle cx="8" cy="8" r="3.200" fill="#e0e0e0"/><circle cx="8" cy="8" r="1.300" fill="#282828"/></svg>
<svg class="a" style="left:1892.2px;top:205.1px;" width="14" height="14" viewBox="0 0 16 16"><path d="M.5 4H4L5.200 2H10.800L12 4H15.500V14H.5Z" fill="#e0e0e0"/><circle cx="8" cy="9" r="3.800" fill="#282828"/><circle cx="8" cy="9" r="2.300" fill="none" stroke="#e0e0e0" stroke-width="1.200"/></svg>
<svg class="a" style="left:1872.2px;top:225.3px;" width="14" height="14" viewBox="0 0 16 16"><path d="M.8 8C3.500 3 12.500 3 15.200 8C12.500 13 3.500 13 .8 8Z" fill="none" stroke="#e0e0e0" stroke-width="1.700"/><circle cx="8" cy="8" r="3.200" fill="#e0e0e0"/><circle cx="8" cy="8" r="1.300" fill="#282828"/></svg>
<svg class="a" style="left:1892.2px;top:225.1px;" width="14" height="14" viewBox="0 0 16 16"><path d="M.5 4H4L5.200 2H10.800L12 4H15.500V14H.5Z" fill="#e0e0e0"/><circle cx="8" cy="9" r="3.800" fill="#282828"/><circle cx="8" cy="9" r="2.300" fill="none" stroke="#e0e0e0" stroke-width="1.200"/></svg>
<svg class="a" style="left:1872.2px;top:245.3px;" width="14" height="14" viewBox="0 0 16 16"><path d="M.8 8C3.500 3 12.500 3 15.200 8C12.500 13 3.500 13 .8 8Z" fill="none" stroke="#e0e0e0" stroke-width="1.700"/><circle cx="8" cy="8" r="3.200" fill="#e0e0e0"/><circle cx="8" cy="8" r="1.300" fill="#282828"/></svg>
<svg class="a" style="left:1892.2px;top:245.1px;" width="14" height="14" viewBox="0 0 16 16"><path d="M.5 4H4L5.200 2H10.800L12 4H15.500V14H.5Z" fill="#e0e0e0"/><circle cx="8" cy="9" r="3.800" fill="#282828"/><circle cx="8" cy="9" r="2.300" fill="none" stroke="#e0e0e0" stroke-width="1.200"/></svg>
<svg class="a" style="left:1767.5px;top:125px;" width="15" height="15" viewBox="0 0 16 16"><path d="M2 12.500A4 4 0 0 1 2.500 7L9 2Q12 .5 14 3Q15 5.500 13 7.500L7.500 13.500A4 4 0 0 1 2 12.500Z" fill="none" stroke="#5b86d8" stroke-width="1.300"/><circle cx="5" cy="10.500" r="2" fill="none" stroke="#5b86d8" stroke-width="1.300"/></svg>
<div class="a" style="left:1784.8px;top:123.5px;width:19.9px;height:18.5px;background:#555;border-radius:5px;"></div>
<svg class="a" style="left:1787px;top:125px;" width="15.5" height="15.5" viewBox="0 0 16 16"><path d="M2 5A2.800 2.800 0 0 1 7.500 4Q8.500 3.200 9.500 4A2.500 2.500 0 0 1 13.500 6.500Q13.500 8 12 8.300H3.500Q2 7.500 2 5Z" fill="none" stroke="#28c89a" stroke-width="1.200"/><rect x="3.500" y="9.500" width="7.500" height="4.500" rx=".8" fill="none" stroke="#28c89a" stroke-width="1.200"/><path d="M11.500 11.800L14.500 9.800V13.800Z" fill="#28c89a"/><rect x="1" y="10.500" width="1.500" height="2" fill="#28c89a"/></svg>
<svg class="a" style="left:1771.2px;top:145px;" width="15" height="15" viewBox="0 0 16 16"><path d="M3 3.500H13L8 13Z" fill="none" stroke="#28c89a" stroke-width="1.200"/><rect x="1.300" y="1.800" width="3.400" height="3.400" rx=".8" fill="#282828" stroke="#28c89a" stroke-width="1.100"/><rect x="11.300" y="1.800" width="3.400" height="3.400" rx=".8" fill="#282828" stroke="#28c89a" stroke-width="1.100"/><rect x="6.300" y="11.300" width="3.400" height="3.400" rx=".8" fill="#282828" stroke="#28c89a" stroke-width="1.100"/></svg>
<svg class="a" style="left:1756.5px;top:205px;" width="15" height="15" viewBox="0 0 16 16"><path d="M3 3.500H13L8 13Z" fill="none" stroke="#28c89a" stroke-width="1.200"/><rect x="1.300" y="1.800" width="3.400" height="3.400" rx=".8" fill="#282828" stroke="#28c89a" stroke-width="1.100"/><rect x="11.300" y="1.800" width="3.400" height="3.400" rx=".8" fill="#282828" stroke="#28c89a" stroke-width="1.100"/><rect x="6.300" y="11.300" width="3.400" height="3.400" rx=".8" fill="#282828" stroke="#28c89a" stroke-width="1.100"/></svg>
<svg class="a" style="left:1780.2px;top:225px;" width="15" height="15" viewBox="0 0 16 16"><path d="M3 3.500H13L8 13Z" fill="none" stroke="#28c89a" stroke-width="1.200"/><rect x="1.300" y="1.800" width="3.400" height="3.400" rx=".8" fill="#282828" stroke="#28c89a" stroke-width="1.100"/><rect x="11.300" y="1.800" width="3.400" height="3.400" rx=".8" fill="#282828" stroke="#28c89a" stroke-width="1.100"/><rect x="6.300" y="11.300" width="3.400" height="3.400" rx=".8" fill="#282828" stroke="#28c89a" stroke-width="1.100"/></svg>
<svg class="a" style="left:1764.3px;top:245px;" width="15" height="15" viewBox="0 0 16 16"><path d="M3 3.500H13L8 13Z" fill="none" stroke="#28c89a" stroke-width="1.200"/><rect x="1.300" y="1.800" width="3.400" height="3.400" rx=".8" fill="#282828" stroke="#28c89a" stroke-width="1.100"/><rect x="11.300" y="1.800" width="3.400" height="3.400" rx=".8" fill="#282828" stroke="#28c89a" stroke-width="1.100"/><rect x="6.300" y="11.300" width="3.400" height="3.400" rx=".8" fill="#282828" stroke="#28c89a" stroke-width="1.100"/></svg>
<svg class="a" style="left:1754.5px;top:185px;" width="15" height="15" viewBox="0 0 16 16"><circle cx="8" cy="8" r="3" fill="none" stroke="#28c89a" stroke-width="1.200"/><path d="M8 .8V3.500M8 12.500V15.200M.8 8H3.500M12.500 8H15.200M2.900 2.900L4.800 4.800M11.200 11.200L13.100 13.100M2.900 13.100L4.800 11.200M11.200 4.800L13.100 2.900" stroke="#28c89a" stroke-width="1.100"/></svg>
<div class="a" style="left:1620.5px;top:437px;width:28.5px;height:715px;background:#1b1b1b;border-radius:0 0 0 5px;"></div>
<div class="a" style="left:1630px;top:414px;width:30.3px;height:17px;background:#282828;border-radius:4px;box-shadow:inset 0 0 0 1px #3a3a3a;"></div>
<svg class="a" style="left:1633.5px;top:415px;" width="15" height="15" viewBox="0 0 16 16"><rect x="1" y="2" width="14" height="5" rx="2.500" fill="#e6e6e6"/><circle cx="12" cy="4.500" r="1.500" fill="#282828"/><rect x="1" y="9" width="14" height="5" rx="2.500" fill="#e6e6e6"/><circle cx="4" cy="11.500" r="1.500" fill="#282828"/></svg>
<svg class="a" style="left:0;top:0" width="1" height="1"><path d="M1650.9 421.3 L1654.0 424.7 L1657.1 421.3" fill="none" stroke="#d0d0d0" stroke-width="1.4" stroke-linecap="round" stroke-linejoin="round"/></svg>
<div class="a" style="left:1709px;top:414px;width:117.3px;height:17px;background:#1d1d1d;border-radius:4px;box-shadow:inset 0 0 0 1px #383838;"></div>
<svg class="a" style="left:1713px;top:415.3px;" width="14.5" height="14.5" viewBox="0 0 16 16"><circle cx="9.500" cy="6.500" r="4.600" fill="none" stroke="#d0d0d0" stroke-width="1.300"/><path d="M6 10L1.500 14.500" stroke="#d0d0d0" stroke-width="1.500" stroke-linecap="round"/></svg>
<div class="t" style="left:1734.4px;top:415.4px;height:16px;line-height:16px;font-size:12px;color:#6e6e6e;letter-spacing:-0.60px;">Search</div>
<div class="a" style="left:1891.8px;top:414px;width:18.4px;height:17px;background:#262626;border-radius:4px;box-shadow:inset 0 0 0 1px #3a3a3a;"></div>
<svg class="a" style="left:0;top:0" width="1" height="1"><path d="M1897.9 421.3 L1901.0 424.7 L1904.1 421.3" fill="none" stroke="#d0d0d0" stroke-width="1.4" stroke-linecap="round" stroke-linejoin="round"/></svg>
<svg class="a" style="left:1659.5px;top:447.3px;" width="14.8" height="14.8" viewBox="0 0 16 16"><rect x="4" y="4" width="8" height="8" fill="#e6e6e6"/><path d="M1 4.500V1H4.500M11.500 1H15V4.500M15 11.500V15H11.500M4.500 15H1V11.500" stroke="#e6e6e6" stroke-width="1.100" fill="none"/></svg>
<div class="t" style="left:1683.3px;top:447.6px;height:16px;line-height:16px;font-size:12px;color:#e6e6e6;letter-spacing:-0.47px;">Plane</div>
<svg class="a" style="left:1893.5px;top:447px;" width="15" height="15" viewBox="0 0 16 16"><path d="M9.500 1.500L14.500 6.500L13 7L10.500 9.500L10 12.500L3.500 6L6.500 5.500L9 3Z" fill="none" stroke="#9a9a9a" stroke-width="1.100" stroke-linejoin="round"/><path d="M6.500 9.500L1.500 14.500" stroke="#9a9a9a" stroke-width="1.200"/></svg>
<div class="a" style="left:1657.5px;top:481px;width:252.7px;height:18.7px;background:#282828;border-radius:4px;box-shadow:inset 0 0 0 1px #3a3a3a;"></div>
<div class="t" style="left:1665.0px;top:483.2px;height:16px;line-height:16px;font-size:12px;color:#e6e6e6;letter-spacing:0.01px;">Add Object Constraint</div>
<svg class="a" style="left:0;top:0" width="1" height="1"><path d="M1900.7 489.3 L1903.8 492.7 L1906.9 489.3" fill="none" stroke="#d0d0d0" stroke-width="1.4" stroke-linecap="round" stroke-linejoin="round"/></svg>
<div class="a" style="left:1623.5px;top:777px;width:26px;height:26.5px;background:#303030;border-radius:5px 0 0 5px;"></div>
<svg class="a" style="left:1628.5px;top:450.5px;" width="15" height="15" viewBox="0 0 16 16"><path d="M3.500 1.500V8" stroke="#d8d8d8" stroke-width="1.200"/><ellipse cx="3.500" cy="11.500" rx="2" ry="2.800" fill="#d8d8d8"/><path d="M9.500 1.500V4.500Q9.500 6 11 6.500V14.500H12.500V6.500Q14 6 14 4.500V1.500" fill="none" stroke="#d8d8d8" stroke-width="1.400"/></svg>
<svg class="a" style="left:1628.5px;top:485.5px;" width="15" height="15" viewBox="0 0 16 16"><path d="M1.500 5H12.500V14H1.500Z" fill="none" stroke="#d8d8d8" stroke-width="1.300"/><path d="M5 5V3H9V5" fill="none" stroke="#d8d8d8" stroke-width="1.200"/><path d="M12.500 5H14.500V14H12.500" fill="none" stroke="#d8d8d8" stroke-width="1.200"/><rect x="12.800" y="7" width="1.200" height="1.200" fill="#d8d8d8"/><rect x="12.800" y="10" width="1.200" height="1.200" fill="#d8d8d8"/></svg>
<svg class="a" style="left:1628.5px;top:515.2px;" width="15" height="15" viewBox="0 0 16 16"><rect x="1.500" y="2" width="13" height="4" rx=".8" fill="#d8d8d8"/><path d="M3.500 7V14H12.500V7" fill="none" stroke="#d8d8d8" stroke-width="1.300"/><path d="M5 12.500L7 9.500L8.500 11.500L9.500 10.500L11 12.500Z" fill="#d8d8d8"/></svg>
<svg class="a" style="left:1628.5px;top:543.1px;" width="15" height="15" viewBox="0 0 16 16"><rect x="5" y="1" width="10" height="10" rx="1" fill="none" stroke="#d8d8d8" stroke-width="1.100"/><path d="M6.500 9.500L9.500 5L11 7.500L12 6.500L13.500 9.500Z" fill="#d8d8d8"/><rect x="11.500" y="2.500" width="2" height="2" fill="#d8d8d8"/><path d="M3 3.500V13H12.500M1 5.500V15H10.500" fill="none" stroke="#d8d8d8" stroke-width="1.100"/></svg>
<svg class="a" style="left:1628.5px;top:571.1px;" width="15" height="15" viewBox="0 0 16 16"><path d="M4.500 1.500L8 10.500H1Z" fill="#d8d8d8"/><circle cx="11.500" cy="4" r="2" fill="#d8d8d8"/><circle cx="10.500" cy="11" r="3.200" fill="none" stroke="#d8d8d8" stroke-width="1.200"/><circle cx="10.500" cy="11" r="1" fill="#d8d8d8"/></svg>
<svg class="a" style="left:1628.5px;top:599px;" width="15" height="15" viewBox="0 0 16 16"><circle cx="8" cy="8" r="5.800" fill="none" stroke="#d05b64" stroke-width="1.300"/><path d="M5 4.500Q7 6 6 8Q5 10 7.500 12M10 3Q9 5.500 11.500 6.500Q12.500 9 10.500 11" fill="none" stroke="#d05b64" stroke-width="1.200"/><path d="M1.500 13.500Q8 17 14.500 13.500" fill="none" stroke="#d05b64" stroke-width="1"/></svg>
<svg class="a" style="left:1628.5px;top:634.1px;" width="15" height="15" viewBox="0 0 16 16"><rect x="2" y="2" width="12" height="3.500" fill="none" stroke="#e6e6e6" stroke-width="1.300"/><path d="M3 5.500V14H13V5.500" fill="none" stroke="#e6e6e6" stroke-width="1.300"/><rect x="6" y="8" width="4" height="1.400" fill="#e6e6e6"/></svg>
<svg class="a" style="left:1628.5px;top:670.4px;" width="15" height="15" viewBox="0 0 16 16"><rect x="4.300" y="4.300" width="7.400" height="7.400" fill="#e8954a"/><path d="M1.500 4.500V1.500H4.500M11.500 1.500H14.500V4.500M14.500 11.500V14.500H11.500M4.500 14.500H1.500V11.500" stroke="#e8954a" stroke-width="1.100" fill="none"/></svg>
<svg class="a" style="left:1628.5px;top:699.5px;" width="15" height="15" viewBox="0 0 16 16"><path d="M13.500 2.500A4 4 0 0 0 8.500 7.500L2 14L3.500 15.500L10 9A4 4 0 0 0 15 4L12.500 6.500L10.500 4.500Z" fill="#5b86d8" transform="translate(-.5 -1)"/></svg>
<svg class="a" style="left:1628.5px;top:727.1px;" width="15" height="15" viewBox="0 0 16 16"><path d="M3 3V12.500M3 3L12.500 9.500M3 3H9" fill="none" stroke="#5b86d8" stroke-width="1.100"/><circle cx="3" cy="3" r="1.600" fill="#5b86d8"/><circle cx="3" cy="13" r="1.600" fill="#5b86d8"/><circle cx="13" cy="10" r="1.600" fill="#5b86d8"/><circle cx="10" cy="3" r="1.300" fill="#5b86d8"/></svg>
<svg class="a" style="left:1628.5px;top:754.5px;" width="15" height="15" viewBox="0 0 16 16"><path d="M11.500 12.500A6 6 0 1 1 12.500 4" fill="none" stroke="#5b86d8" stroke-width="1.300"/><circle cx="8" cy="8" r="2.200" fill="#5b86d8"/><circle cx="13" cy="3" r="1.300" fill="#5b86d8"/></svg>
<svg class="a" style="left:1628.5px;top:783px;" width="15" height="15" viewBox="0 0 16 16"><path d="M2 12.500A4 4 0 0 1 2.500 7L9 2Q12 .5 14 3Q15 5.500 13 7.500L7.500 13.500A4 4 0 0 1 2 12.500Z" fill="none" stroke="#5b86d8" stroke-width="1.300"/><circle cx="5" cy="10.500" r="2" fill="none" stroke="#5b86d8" stroke-width="1.300"/></svg>
<svg class="a" style="left:1628.5px;top:810.9px;" width="15" height="15" viewBox="0 0 16 16"><path d="M3 3.500H13L8 13Z" fill="none" stroke="#28c89a" stroke-width="1.200"/><rect x="1.300" y="1.800" width="3.400" height="3.400" rx=".8" fill="#282828" stroke="#28c89a" stroke-width="1.100"/><rect x="11.300" y="1.800" width="3.400" height="3.400" rx=".8" fill="#282828" stroke="#28c89a" stroke-width="1.100"/><rect x="6.300" y="11.300" width="3.400" height="3.400" rx=".8" fill="#282828" stroke="#28c89a" stroke-width="1.100"/></svg>
<svg class="a" style="left:1628.5px;top:838.5px;" width="15" height="15" viewBox="0 0 16 16"><circle cx="8" cy="8" r="6" fill="none" stroke="#d05b64" stroke-width="1.400"/><path d="M8 8V2A6 6 0 0 0 2 8Z" fill="#d05b64"/><path d="M8 8H14A6 6 0 0 1 8 14Z" fill="#d05b64"/></svg>
<div class="a" style="left:0px;top:1071.5px;width:1617px;height:25.5px;background:#2e2e2e;border-radius:5px 5px 0 0;"></div>
<div class="a" style="left:0px;top:1097px;width:1617px;height:23px;background:#1d1d1d;border-radius:0px;"></div>
<div class="a" style="left:0px;top:1120px;width:1617px;height:32.5px;background:#1e1e1e;border-radius:0 0 5px 5px;"></div>
<div class="a" style="left:59.91px;top:1120px;width:1496.49px;height:32.5px;background:#2b2b2b;border-radius:0px;"></div>
<svg class="a" style="left:0;top:0" width="1617" height="1160" viewBox="0 0 1617 1160"><rect x="53.4" y="1120" width="1" height="32" fill="#181818"/><rect x="83.4" y="1120" width="1" height="32" fill="#252525"/><rect x="113.5" y="1120" width="1" height="32" fill="#1a1a1a"/><rect x="143.5" y="1120" width="1" height="32" fill="#252525"/><rect x="173.6" y="1120" width="1" height="32" fill="#1a1a1a"/><rect x="203.7" y="1120" width="1" height="32" fill="#252525"/><rect x="233.7" y="1120" width="1" height="32" fill="#1a1a1a"/><rect x="263.8" y="1120" width="1" height="32" fill="#252525"/><rect x="293.8" y="1120" width="1" height="32" fill="#1a1a1a"/><rect x="323.8" y="1120" width="1" height="32" fill="#252525"/><rect x="353.9" y="1120" width="1" height="32" fill="#1a1a1a"/><rect x="383.9" y="1120" width="1" height="32" fill="#252525"/><rect x="414.0" y="1120" width="1" height="32" fill="#1a1a1a"/><rect x="444.0" y="1120" width="1" height="32" fill="#252525"/><rect x="474.1" y="1120" width="1" height="32" fill="#1a1a1a"/><rect x="504.1" y="1120" width="1" height="32" fill="#252525"/><rect x="534.2" y="1120" width="1" height="32" fill="#1a1a1a"/><rect x="564.2" y="1120" width="1" height="32" fill="#252525"/><rect x="594.3" y="1120" width="1" height="32" fill="#1a1a1a"/><rect x="624.3" y="1120" width="1" height="32" fill="#252525"/><rect x="654.4" y="1120" width="1" height="32" fill="#1a1a1a"/><rect x="684.4" y="1120" width="1" height="32" fill="#252525"/><rect x="714.5" y="1120" width="1" height="32" fill="#1a1a1a"/><rect x="744.5" y="1120" width="1" height="32" fill="#252525"/><rect x="774.6" y="1120" width="1" height="32" fill="#1a1a1a"/><rect x="804.6" y="1120" width="1" height="32" fill="#252525"/><rect x="834.7" y="1120" width="1" height="32" fill="#1a1a1a"/><rect x="864.8" y="1120" width="1" height="32" fill="#252525"/><rect x="894.8" y="1120" width="1" height="32" fill="#1a1a1a"/><rect x="924.8" y="1120" width="1" height="32" fill="#252525"/><rect x="954.9" y="1120" width="1" height="32" fill="#1a1a1a"/><rect x="984.9" y="1120" width="1" height="32" fill="#252525"/><rect x="1015.0" y="1120" width="1" height="32" fill="#1a1a1a"/><rect x="1045.0" y="1120" width="1" height="32" fill="#252525"/><rect x="1075.1" y="1120" width="1" height="32" fill="#1a1a1a"/><rect x="1105.2" y="1120" width="1" height="32" fill="#252525"/><rect x="1135.2" y="1120" width="1" height="32" fill="#1a1a1a"/><rect x="1165.2" y="1120" width="1" height="32" fill="#252525"/><rect x="1195.3" y="1120" width="1" height="32" fill="#1a1a1a"/><rect x="1225.4" y="1120" width="1" height="32" fill="#252525"/><rect x="1255.4" y="1120" width="1" height="32" fill="#1a1a1a"/><rect x="1285.5" y="1120" width="1" height="32" fill="#252525"/><rect x="1315.5" y="1120" width="1" height="32" fill="#1a1a1a"/><rect x="1345.5" y="1120" width="1" height="32" fill="#252525"/><rect x="1375.6" y="1120" width="1" height="32" fill="#1a1a1a"/><rect x="1405.7" y="1120" width="1" height="32" fill="#252525"/><rect x="1435.7" y="1120" width="1" height="32" fill="#1a1a1a"/><rect x="1465.8" y="1120" width="1" height="32" fill="#252525"/><rect x="1495.8" y="1120" width="1" height="32" fill="#1a1a1a"/><rect x="1525.9" y="1120" width="1" height="32" fill="#252525"/><rect x="1555.9" y="1120" width="1" height="32" fill="#1a1a1a"/><rect x="1586.0" y="1120" width="1" height="32" fill="#1b1b1b"/></svg>
<div class="t" style="left:107.6px;top:1102.0px;height:16px;line-height:16px;font-size:12px;color:#b4b4b4;">10</div>
<div class="t" style="left:167.7px;top:1102.0px;height:16px;line-height:16px;font-size:12px;color:#b4b4b4;">20</div>
<div class="t" style="left:227.8px;top:1102.0px;height:16px;line-height:16px;font-size:12px;color:#b4b4b4;">30</div>
<div class="t" style="left:287.9px;top:1102.0px;height:16px;line-height:16px;font-size:12px;color:#b4b4b4;">40</div>
<div class="t" style="left:348.0px;top:1102.0px;height:16px;line-height:16px;font-size:12px;color:#b4b4b4;">50</div>
<div class="t" style="left:408.1px;top:1102.0px;height:16px;line-height:16px;font-size:12px;color:#b4b4b4;">60</div>
<div class="t" style="left:468.2px;top:1102.0px;height:16px;line-height:16px;font-size:12px;color:#b4b4b4;">70</div>
<div class="t" style="left:528.3px;top:1102.0px;height:16px;line-height:16px;font-size:12px;color:#b4b4b4;">80</div>
<div class="t" style="left:588.4px;top:1102.0px;height:16px;line-height:16px;font-size:12px;color:#b4b4b4;">90</div>
<div class="t" style="left:645.2px;top:1102.0px;height:16px;line-height:16px;font-size:12px;color:#b4b4b4;">100</div>
<div class="t" style="left:705.7px;top:1102.0px;height:16px;line-height:16px;font-size:12px;color:#b4b4b4;">110</div>
<div class="t" style="left:765.4px;top:1102.0px;height:16px;line-height:16px;font-size:12px;color:#b4b4b4;">120</div>
<div class="t" style="left:825.5px;top:1102.0px;height:16px;line-height:16px;font-size:12px;color:#b4b4b4;">130</div>
<div class="t" style="left:885.6px;top:1102.0px;height:16px;line-height:16px;font-size:12px;color:#b4b4b4;">140</div>
<div class="t" style="left:945.7px;top:1102.0px;height:16px;line-height:16px;font-size:12px;color:#b4b4b4;">150</div>
<div class="t" style="left:1005.8px;top:1102.0px;height:16px;line-height:16px;font-size:12px;color:#b4b4b4;">160</div>
<div class="t" style="left:1065.9px;top:1102.0px;height:16px;line-height:16px;font-size:12px;color:#b4b4b4;">170</div>
<div class="t" style="left:1126.0px;top:1102.0px;height:16px;line-height:16px;font-size:12px;color:#b4b4b4;">180</div>
<div class="t" style="left:1186.1px;top:1102.0px;height:16px;line-height:16px;font-size:12px;color:#b4b4b4;">190</div>
<div class="t" style="left:1246.2px;top:1102.0px;height:16px;line-height:16px;font-size:12px;color:#b4b4b4;">200</div>
<div class="t" style="left:1306.3px;top:1102.0px;height:16px;line-height:16px;font-size:12px;color:#b4b4b4;">210</div>
<div class="t" style="left:1366.4px;top:1102.0px;height:16px;line-height:16px;font-size:12px;color:#b4b4b4;">220</div>
<div class="t" style="left:1426.5px;top:1102.0px;height:16px;line-height:16px;font-size:12px;color:#b4b4b4;">230</div>
<div class="t" style="left:1486.6px;top:1102.0px;height:16px;line-height:16px;font-size:12px;color:#b4b4b4;">240</div>
<div class="t" style="left:1546.7px;top:1102.0px;height:16px;line-height:16px;font-size:12px;color:#b4b4b4;">250</div>
<div class="a" style="left:11px;top:1147px;width:1595px;height:3px;background:#3a3a3a;border-radius:2px;"></div>
<div class="a" style="left:59.3px;top:1116px;width:2px;height:36.5px;background:#4772b3;border-radius:0px;"></div>
<div class="a" style="left:48.7px;top:1100px;width:23.6px;height:17px;background:#4772b3;border-radius:4px;"></div>
<div class="t" style="left:57.0px;top:1101.5px;height:16px;line-height:16px;font-size:12px;color:#fff;">1</div>
<svg class="a" style="left:1px;top:1122px;" width="8" height="12" viewBox="0 0 8 12"><path d="M2 1.500L6 6L2 10.500" fill="none" stroke="#8a8a8a" stroke-width="1.200"/></svg>
<svg class="a" style="left:1608px;top:1122px;" width="8" height="12" viewBox="0 0 8 12"><path d="M6 1.500L2 6L6 10.500" fill="none" stroke="#8a8a8a" stroke-width="1.200"/></svg>
<div class="a" style="left:9px;top:1075px;width:30.3px;height:18.3px;background:#262626;border-radius:4px;box-shadow:inset 0 0 0 1px #3a3a3a;"></div>
<svg class="a" style="left:12.5px;top:1076.7px;" width="15" height="15" viewBox="0 0 16 16"><circle cx="8" cy="8" r="6.800" fill="#e6e6e6"/><path d="M8 8L10.500 3.500M8 8L5 11" stroke="#262626" stroke-width="1.500" stroke-linecap="round"/></svg>
<svg class="a" style="left:0;top:0" width="1" height="1"><path d="M30.4 1082.8 L33.5 1086.2 L36.6 1082.8" fill="none" stroke="#d0d0d0" stroke-width="1.4" stroke-linecap="round" stroke-linejoin="round"/></svg>
<div class="a" style="left:45.7px;top:1075px;width:70.6px;height:18.3px;background:#262626;border-radius:4px 0 0 4px;box-shadow:inset 0 0 0 1px #3a3a3a;"></div>
<div class="t" style="left:53.3px;top:1076.0px;height:16px;line-height:16px;font-size:12px;color:#e3e3e3;letter-spacing:-0.38px;">Playback</div>
<svg class="a" style="left:0;top:0" width="1" height="1"><path d="M106.9 1083.1 L110.0 1086.5 L113.1 1083.1" fill="none" stroke="#d0d0d0" stroke-width="1.4" stroke-linecap="round" stroke-linejoin="round"/></svg>
<div class="a" style="left:116.3px;top:1075px;width:61px;height:18.3px;background:#262626;border-radius:0 4px 4px 0;box-shadow:inset 0 0 0 1px #3a3a3a;"></div>
<div class="t" style="left:124.0px;top:1076.0px;height:16px;line-height:16px;font-size:12px;color:#e3e3e3;letter-spacing:-0.28px;">Keying</div>
<svg class="a" style="left:0;top:0" width="1" height="1"><path d="M168.2 1083.1 L171.3 1086.5 L174.4 1083.1" fill="none" stroke="#d0d0d0" stroke-width="1.4" stroke-linecap="round" stroke-linejoin="round"/></svg>
<div class="t" style="left:187.3px;top:1076.0px;height:16px;line-height:16px;font-size:12px;color:#e3e3e3;letter-spacing:-0.26px;">View</div>
<div class="t" style="left:228.3px;top:1076.0px;height:16px;line-height:16px;font-size:12px;color:#e3e3e3;letter-spacing:-0.47px;">Marker</div>
<div class="a" style="left:716.7px;top:1075px;width:18.3px;height:18.3px;background:#4a4a4a;border-radius:4px 0 0 4px;"></div>
<svg class="a" style="left:718.5px;top:1076.8px;" width="15" height="15" viewBox="0 0 16 16"><circle cx="8" cy="8" r="4.800" fill="none" stroke="#cfcfcf" stroke-width="1.200"/></svg>
<div class="a" style="left:735.5px;top:1075px;width:18.5px;height:18.3px;background:#2a2a2a;border-radius:0 4px 4px 0;"></div>
<svg class="a" style="left:0;top:0" width="1" height="1"><path d="M741.9 1083.4 L744.5 1086.2 L747.1 1083.4" fill="none" stroke="#5a5a5a" stroke-width="1.4" stroke-linecap="round" stroke-linejoin="round"/></svg>
<div class="a" style="left:761.7px;top:1075px;width:19.3px;height:18.3px;background:#545454;border-radius:4px 0 0 4px;"></div>
<svg class="a" style="left:762.85px;top:1075.7px;" width="17" height="17" viewBox="0 0 16 16"><path d="M3.500 3.500V12.500" stroke="#ececec" stroke-width="1.800"/><path d="M12.500 3.500V12.500L5.500 8Z" fill="#ececec"/></svg>
<div class="a" style="left:781.5px;top:1075px;width:18.8px;height:18.3px;background:#545454;border-radius:0;"></div>
<svg class="a" style="left:782.15px;top:1075.7px;" width="17" height="17" viewBox="0 0 16 16"><path d="M5.500 4.500L9 8L5.500 11.500L2 8Z" fill="#ececec"/><path d="M14.500 4V12L9.500 8Z" fill="#ececec"/></svg>
<div class="a" style="left:800.8px;top:1075px;width:19.2px;height:18.3px;background:#545454;border-radius:0;"></div>
<svg class="a" style="left:801.65px;top:1075.7px;" width="17" height="17" viewBox="0 0 16 16"><path d="M12 3V13L3.500 8Z" fill="#ececec"/></svg>
<div class="a" style="left:820.5px;top:1075px;width:19px;height:18.3px;background:#545454;border-radius:0;"></div>
<svg class="a" style="left:821.25px;top:1075.7px;" width="17" height="17" viewBox="0 0 16 16"><path d="M4 3V13L12.500 8Z" fill="#ececec"/></svg>
<div class="a" style="left:840px;top:1075px;width:19.3px;height:18.3px;background:#545454;border-radius:0;"></div>
<svg class="a" style="left:840.9px;top:1075.7px;" width="17" height="17" viewBox="0 0 16 16"><path d="M10.500 4.500L14 8L10.500 11.500L7 8Z" fill="#ececec"/><path d="M1.500 4V12L6.500 8Z" fill="#ececec"/></svg>
<div class="a" style="left:859.8px;top:1075px;width:19.5px;height:18.3px;background:#545454;border-radius:0 4px 4px 0;"></div>
<svg class="a" style="left:860.8px;top:1075.7px;" width="17" height="17" viewBox="0 0 16 16"><path d="M12.500 3.500V12.500" stroke="#ececec" stroke-width="1.800"/><path d="M3.500 3.500V12.500L10.500 8Z" fill="#ececec"/></svg>
<div class="a" style="left:1335px;top:1075px;width:73.3px;height:18.3px;background:#545454;border-radius:4px;"></div>
<div class="t" style="left:1367.4px;top:1077.0px;height:16px;line-height:16px;font-size:12px;color:#e6e6e6;">1</div>
<div class="a" style="left:1415px;top:1075px;width:18.3px;height:18.3px;background:#545454;border-radius:4px 0 0 4px;"></div>
<svg class="a" style="left:1416.8px;top:1076.5px;" width="15" height="15" viewBox="0 0 16 16"><circle cx="8" cy="9" r="5.300" fill="none" stroke="#e6e6e6" stroke-width="1.200"/><path d="M8 5.500V9H10.500M6 1.500H10M8 1.500V3.500M12.500 3.500L14 2" fill="none" stroke="#e6e6e6" stroke-width="1.200"/></svg>
<div class="a" style="left:1433.8px;top:1075px;width:88.5px;height:18.3px;background:#545454;border-radius:0px;"></div>
<div class="t" style="left:1449.3px;top:1077.0px;height:16px;line-height:16px;font-size:12px;color:#e6e6e6;letter-spacing:-0.34px;">Start</div>
<div class="t" style="right:408.5px;top:1077.0px;height:16px;line-height:16px;font-size:12px;color:#e6e6e6;">1</div>
<div class="a" style="left:1522.8px;top:1075px;width:85.5px;height:18.3px;background:#545454;border-radius:0 4px 4px 0;"></div>
<div class="t" style="left:1538.3px;top:1077.0px;height:16px;line-height:16px;font-size:12px;color:#e6e6e6;letter-spacing:-0.60px;">End</div>
<div class="t" style="left:1574.3px;top:1077.0px;height:16px;line-height:16px;font-size:12px;color:#e6e6e6;letter-spacing:0.34px;">250</div>
<svg class="a" style="left:9px;top:1157px;" width="12" height="16" viewBox="0 0 12 16"><rect x="1" y="1" width="10" height="14.500" rx="3.200" fill="none" stroke="#9a9a9a" stroke-width="1.100"/><path d="M1.500 7V4Q1.500 1.500 5 1.500V7Z" fill="#9a9a9a"/></svg>
<div class="t" style="left:24.0px;top:1158.0px;height:16px;line-height:16px;font-size:12px;color:#8c8c8c;letter-spacing:0.01px;">Select Toggle</div>
<svg class="a" style="left:105.5px;top:1157px;" width="12" height="16" viewBox="0 0 12 16"><rect x="1" y="1" width="10" height="14.500" rx="3.200" fill="none" stroke="#9a9a9a" stroke-width="1.100"/><rect x="4.300" y="2.500" width="3" height="5.500" rx="1.300" fill="#9a9a9a"/></svg>
<div class="t" style="left:119.0px;top:1158.0px;height:16px;line-height:16px;font-size:12px;color:#8c8c8c;letter-spacing:-0.01px;">Dolly View</div>
<svg class="a" style="left:184px;top:1157px;" width="12" height="16" viewBox="0 0 12 16"><rect x="1" y="1" width="10" height="14.500" rx="3.200" fill="none" stroke="#9a9a9a" stroke-width="1.100"/><path d="M6.500 .8H11V8.500H6.500Z" fill="#9a9a9a"/></svg>
<div class="t" style="left:198.3px;top:1158.0px;height:16px;line-height:16px;font-size:12px;color:#8c8c8c;letter-spacing:-0.34px;">Lasso Select</div>
<svg class="a" style="left:1852.5px;top:1158px;" width="15" height="15" viewBox="0 0 16 16"><circle cx="8" cy="8" r="5.500" fill="none" stroke="#707070" stroke-width="1.100"/><path d="M2.500 8H13.500M8 2.500Q4.500 8 8 13.500M8 2.500Q11.500 8 8 13.500" fill="none" stroke="#707070" stroke-width="1"/><path d="M2 2L14 14" stroke="#707070" stroke-width="1.300"/></svg>
<div class="a" style="left:1875.5px;top:1158.5px;width:1px;height:13.5px;background:#6a6a6a;border-radius:0px;"></div>
<div class="t" style="left:1880.0px;top:1158.0px;height:16px;line-height:16px;font-size:12px;color:#8c8c8c;letter-spacing:0.00px;">4.5.4</div>
<div class="a" style="left:0px;top:56px;width:534px;height:1012px;border-radius:5px;box-shadow:inset 0 0 0 1px rgba(255,255,255,.075);pointer-events:none"></div>
<div class="a" style="left:536.5px;top:56px;width:1079.5px;height:1012px;border-radius:5px;box-shadow:inset 0 0 0 1px rgba(255,255,255,.075);pointer-events:none"></div>
<div class="a" style="left:1620px;top:56px;width:297px;height:351px;border-radius:5px;box-shadow:inset 0 0 0 1px rgba(255,255,255,.075);pointer-events:none"></div>
<div class="a" style="left:1620px;top:410px;width:297px;height:742.5px;border-radius:5px;box-shadow:inset 0 0 0 1px rgba(255,255,255,.075);pointer-events:none"></div>
<div class="a" style="left:0px;top:1071.5px;width:1617px;height:81px;border-radius:5px;box-shadow:inset 0 0 0 1px rgba(255,255,255,.075);pointer-events:none"></div>
<div class="a" style="left:0;top:9px;width:1px;height:1157px;background:rgba(125,125,125,.55)"></div>
</div>
</body></html>
